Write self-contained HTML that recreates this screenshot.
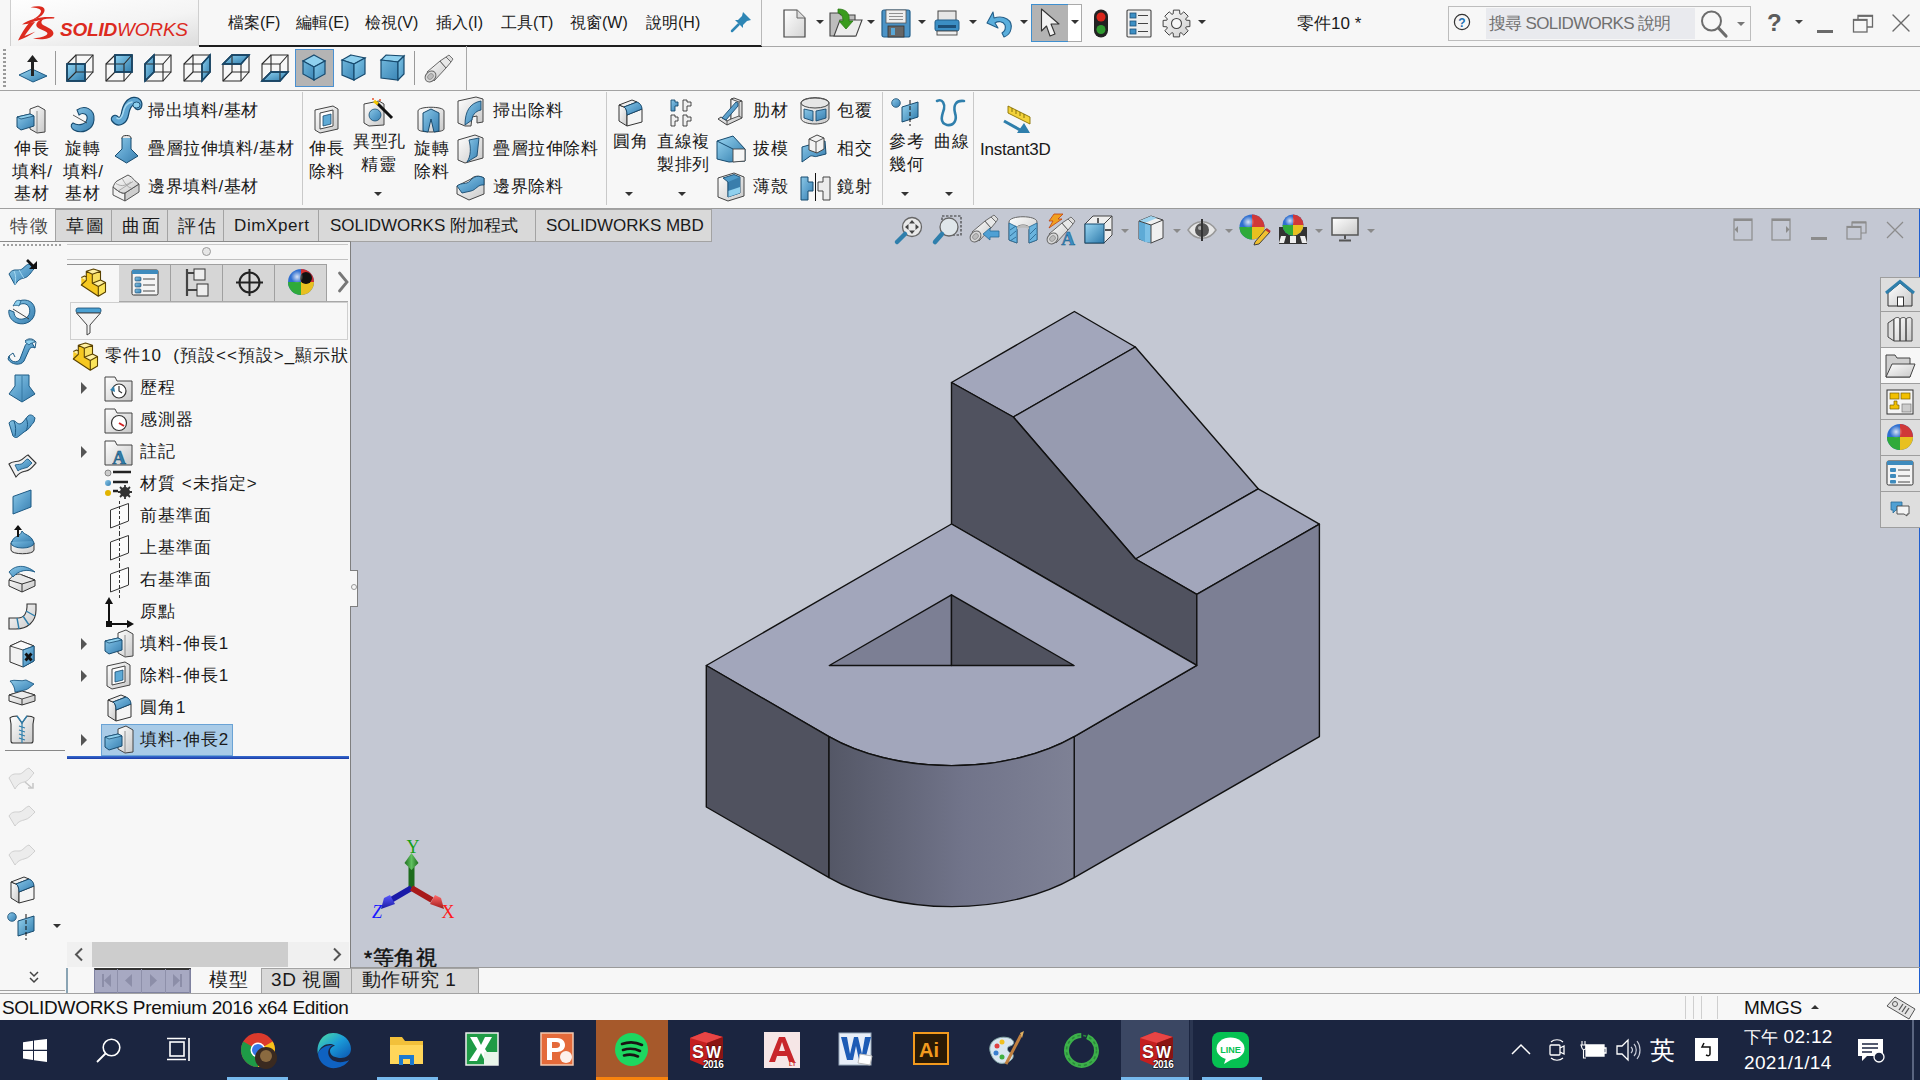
<!DOCTYPE html>
<html><head><meta charset="utf-8">
<style>
*{margin:0;padding:0;box-sizing:border-box}
html,body{width:1920px;height:1080px;overflow:hidden;background:#f7f7f7;font-family:"Liberation Sans",sans-serif;color:#111;position:relative}
.a{position:absolute}
.t{position:absolute;white-space:nowrap;line-height:1}
svg{position:absolute;overflow:visible}
.menu{font-size:16px;color:#1a1a1a}
.rb{font-size:17px;letter-spacing:0.6px;color:#1a1a1a}
.tb{font-size:17px;color:#1a1a1a}
.tr{font-size:17px;letter-spacing:1px;color:#1a1a1a}
.bt{font-size:19px;letter-spacing:0.6px;color:#1a1a1a}
.st{font-size:19px;letter-spacing:-0.3px;color:#111}
.tw{font-size:17px;color:#fff}
.vl{font-size:21px;font-weight:400;-webkit-text-stroke:0.5px #111;color:#111}
.dd{position:absolute;width:0;height:0;border-left:4px solid transparent;border-right:4px solid transparent;border-top:4px solid #333}
</style></head><body>
<div class="a" style="left:351px;top:209px;width:1569px;height:759px;background:#c4c8d3"></div>
<svg style="left:0;top:0" width="1920" height="1080" viewBox="0 0 1920 1080">
 <defs>
  <linearGradient id="cg" x1="829" x2="1074" y1="0" y2="0" gradientUnits="userSpaceOnUse">
   <stop offset="0" stop-color="#545766"/>
   <stop offset="0.55" stop-color="#71748a"/>
   <stop offset="1" stop-color="#7e8195"/>
  </linearGradient>
 </defs>
 <g stroke="#111" stroke-width="1.4" stroke-linejoin="round">
  <polygon points="951.5,382.5 1074.4,311.5 1135.3,347 1013.3,417" fill="#a2a6bb"/>
  <polygon points="1013.3,417 1135.3,347 1258.2,488.8 1135.6,559" fill="#979bb0"/>
  <polygon points="1135.6,559 1258.2,488.8 1319.4,524.2 1196.8,594.3" fill="#a2a6bb"/>
  <polygon points="951.5,382.5 1013.3,417 1135.6,559 1196.8,594.3 1196.8,665.3 951.5,524" fill="#50525f"/>
  <polygon points="1196.8,594.3 1319.4,524.2 1319.4,736.6 1074.2,877.6 1074.2,736.6 1196.8,665.3" fill="#7c7f94"/>
  <path d="M706.3,665.5 L951.5,524 L1196.8,665.3 L1074.2,736.6 A173.2 99 0 0 1 829,736.6 Z" fill="#a2a6bb"/>
  <polygon points="706.3,665.5 829,736.6 829,877.6 706.3,807" fill="#50525f"/>
  <path d="M829,736.6 A173.2 99 0 0 0 1074.2,736.6 L1074.2,877.6 A173.2 99 0 0 1 829,877.6 Z" fill="url(#cg)"/>
  <polygon points="829.3,665.5 951.5,594.8 951.5,665.5" fill="#7c7f94"/>
  <polygon points="951.5,594.8 1074.1,665.5 951.5,665.5" fill="#50525f"/>
 </g>
</svg>

<!-- ============ TITLE / MENU BAR ============ -->
<div class="a" style="left:0;top:0;width:1920px;height:46px;background:#f7f7f7"></div>
<div class="a" style="left:10px;top:0;width:189px;height:46px;background:linear-gradient(170deg,#fefefe 0%,#f4f4f4 55%,#dcdcdc 100%);border-left:1px solid #cfcfcf;border-right:1px solid #cfcfcf"></div>
<!-- logo -->
<svg style="left:18px;top:6px" width="37" height="35" viewBox="0 0 37 35">
 <g fill="#dc2a1e">
  <path d="M12.5,1.2 C 19,-0.5 27.5,-0.5 26.5,5 C 25.5,9.5 20,12.5 14,13.8 C 18.5,11.5 22.5,8.5 23,5.5 C 23.5,2.5 18,1.8 12.5,1.2 Z"/>
  <path d="M4,18.5 C 12,12.5 25,10 36.5,11.3 L36,12.6 C 27,12.5 18,14.5 10.5,17.8 Z"/>
  <path d="M11.5,16.5 L17,16 C 12.5,21.5 9,26.5 6.5,30 C 10.5,28.5 14,27 17.5,25.5 C 12,29.5 6,32.5 0,34.5 C 3,28 7,21.5 11.5,16.5 Z"/>
  <path d="M26.5,12.4 C 19,14 15.5,19.5 21,22.5 C 25,24.5 32,26 28.5,29 C 25,31.5 19,32 15,32.5 C 22,34 32,33.8 35,29 C 37.5,24.5 30,21.5 26,19.5 C 22.5,17.5 22.5,14.5 26.5,12.4 Z"/>
 </g>
</svg>
<div class="t" style="left:60px;top:20px;font-size:19px;font-style:italic;color:#dc2a1e;letter-spacing:-0.2px"><b style="font-weight:700">SOLID</b>WORKS</div>

<div class="a" style="left:199px;top:45px;width:563px;height:1.5px;background:#1e1e1e"></div>
<div class="a" style="left:761px;top:0;width:1px;height:46px;background:#b9b9b9"></div>
<div class="a" style="left:762px;top:46px;width:1158px;height:1px;background:#a8a8a8"></div>

<div class="t menu" style="left:228px;top:15px">檔案(F)</div>
<div class="t menu" style="left:296px;top:15px">編輯(E)</div>
<div class="t menu" style="left:365px;top:15px">檢視(V)</div>
<div class="t menu" style="left:436px;top:15px">插入(I)</div>
<div class="t menu" style="left:501px;top:15px">工具(T)</div>
<div class="t menu" style="left:570px;top:15px">視窗(W)</div>
<div class="t menu" style="left:646px;top:15px">說明(H)</div>
<!-- pin -->
<svg style="left:730px;top:11px" width="22" height="22" viewBox="0 0 22 22">
 <path d="M13,1 L21,9 L17,10 L13,14 L13,17 L5,9 L8,9 L12,5 Z" fill="#2e86b5"/>
 <path d="M8.5,13.5 L2,20" stroke="#2e86b5" stroke-width="2.5" stroke-linecap="round"/>
</svg>

<!-- standard toolbar -->
<svg style="left:783px;top:9px" width="24" height="29" viewBox="0 0 24 29">
 <defs><linearGradient id="pg" x1="0" y1="0" x2="1" y2="1"><stop offset="0" stop-color="#fff"/><stop offset="1" stop-color="#d4d4d4"/></linearGradient></defs>
 <path d="M1,1 L14,1 L22,9 L22,28 L1,28 Z" fill="url(#pg)" stroke="#444" stroke-width="1.2"/>
 <path d="M14,1 L14,9 L22,9" fill="#ddd" stroke="#666" stroke-width="1"/>
</svg>
<div class="dd" style="left:816px;top:20px"></div>
<svg style="left:829px;top:8px" width="34" height="30" viewBox="0 0 34 30">
 <path d="M1,5 L10,5 L12,7 L26,7 L26,28 L1,28 Z" fill="#bdbdbd" stroke="#444" stroke-width="1.1"/>
 <path d="M5,28 L11,12 L33,12 L27,28 Z" fill="#ececec" stroke="#444" stroke-width="1.1"/>
 <path d="M9,1 C 18,1 21,6 20,13 L24,13 L17,21 L10,13 L14,13 C 14,8 12,5 9,5 Z" fill="#3a9b1e" stroke="#2b7a14" stroke-width="0.8"/>
</svg>
<div class="dd" style="left:867px;top:20px"></div>
<svg style="left:881px;top:9px" width="30" height="29" viewBox="0 0 30 29">
 <rect x="1" y="1" width="28" height="27" rx="2" fill="#4b93c6" stroke="#235f8a" stroke-width="1.2"/>
 <rect x="5" y="1" width="20" height="13" fill="#eee" stroke="#555" stroke-width="0.8"/>
 <path d="M8,4.5 H22 M8,7.5 H22 M8,10.5 H22" stroke="#777" stroke-width="0.8"/>
 <rect x="7" y="17" width="16" height="11" fill="#666" stroke="#333" stroke-width="0.8"/>
 <rect x="10" y="19" width="4" height="7" fill="#5aa7d6"/>
</svg>
<div class="dd" style="left:918px;top:20px"></div>
<svg style="left:934px;top:10px" width="28" height="26" viewBox="0 0 28 26">
 <rect x="4" y="1" width="18" height="10" fill="#e6e6e6" stroke="#444" stroke-width="1"/>
 <rect x="1" y="10" width="24" height="11" rx="2" fill="#3b8ec4" stroke="#235f8a" stroke-width="1"/>
 <rect x="4" y="15" width="18" height="3" fill="#1d4f77"/>
 <rect x="3" y="21" width="20" height="4" fill="#eee" stroke="#444" stroke-width="0.9"/>
</svg>
<div class="dd" style="left:969px;top:20px"></div>
<svg style="left:984px;top:10px" width="30" height="28" viewBox="0 0 30 28">
 <path d="M3,13 L9,2 L10,8 C 20,5 29,10 27,19 C 26,24 23,26 20,27 L18,23 C 21,21 22,18 21,15 C 19,11 14,11 11,13 L14,18 Z" fill="#5aaedc" stroke="#235f8a" stroke-width="1.1" stroke-linejoin="round"/>
</svg>
<div class="dd" style="left:1020px;top:20px"></div>
<div class="a" style="left:1031px;top:4px;width:38px;height:38px;background:#b3b3b3;border:1px solid #3f8fcf"></div>
<div class="a" style="left:1068px;top:4px;width:14px;height:38px;background:#fff;border:1px solid #aaa;border-left:none"></div>
<svg style="left:1040px;top:8px" width="22" height="30" viewBox="0 0 22 30">
 <path d="M1.5,1 L19,16 L11,16 L15,26 L10,28 L6.5,18 L1.5,23 Z" fill="#f2f2f2" stroke="#333" stroke-width="1.1" stroke-linejoin="round"/>
</svg>
<div class="dd" style="left:1071px;top:20px"></div>
<svg style="left:1093px;top:9px" width="16" height="29" viewBox="0 0 16 29">
 <rect x="1" y="0.5" width="14" height="28" rx="7" fill="#222"/>
 <circle cx="8" cy="8" r="4.5" fill="#d9261b"/><circle cx="8" cy="20.5" r="4.5" fill="#2f9a2f"/>
</svg>
<svg style="left:1126px;top:9px" width="26" height="29" viewBox="0 0 26 29">
 <rect x="1" y="1" width="24" height="27" rx="1" fill="#f0f0f0" stroke="#444" stroke-width="1.1"/>
 <rect x="4" y="4" width="6" height="5" fill="#3d8fc4" stroke="#1d4f77" stroke-width="0.8"/>
 <rect x="4" y="12" width="6" height="5" fill="#3d8fc4" stroke="#1d4f77" stroke-width="0.8"/>
 <rect x="4" y="20" width="6" height="5" fill="#3d8fc4" stroke="#1d4f77" stroke-width="0.8"/>
 <path d="M12,6.5 H22 M12,14.5 H22 M12,22.5 H22" stroke="#444" stroke-width="1"/>
</svg>
<svg style="left:1162px;top:9px" width="29" height="29" viewBox="0 0 29 29"><defs><linearGradient id="gg" x1="0" y1="0" x2="1" y2="1"><stop offset="0" stop-color="#fafafa"/><stop offset="1" stop-color="#cfcfcf"/></linearGradient></defs><path d="M24.2,11.2 L27.9,11.4 L27.9,17.6 L24.2,17.8 L23.6,19.0 L26.2,21.8 L21.8,26.2 L19.0,23.6 L17.8,24.2 L17.6,27.9 L11.4,27.9 L11.2,24.2 L10.0,23.6 L7.2,26.2 L2.8,21.8 L5.4,19.0 L4.8,17.8 L1.1,17.6 L1.1,11.4 L4.8,11.2 L5.4,10.0 L2.8,7.2 L7.2,2.8 L10.0,5.4 L11.2,4.8 L11.4,1.1 L17.6,1.1 L17.8,4.8 L19.0,5.4 L21.8,2.8 L26.2,7.2 L23.6,10.0 Z" fill="url(#gg)" stroke="#444" stroke-width="1" stroke-linejoin="round"/><circle cx="14.5" cy="14.5" r="5" fill="#f7f7f7" stroke="#444" stroke-width="1.1"/></svg>
<div class="dd" style="left:1198px;top:20px"></div>

<div class="t" style="left:1297px;top:15px;font-size:17px;color:#1a1a1a">零件10 *</div>

<!-- search -->
<div class="a" style="left:1448px;top:6px;width:303px;height:35px;background:#f7f7f7;border:1px solid #bdbdbd"></div>
<div class="a" style="left:1486px;top:8px;width:209px;height:31px;background:#e9eaee"></div>
<svg style="left:1453px;top:13px" width="18" height="18" viewBox="0 0 18 18">
 <circle cx="9" cy="9" r="7.6" fill="#f7f7f7" stroke="#333" stroke-width="1.2"/>
 <text x="9" y="13.5" font-size="12" font-weight="bold" text-anchor="middle" fill="#1e6fb0" font-family="Liberation Sans">?</text>
</svg>
<div class="t" style="left:1489px;top:15px;font-size:17px;letter-spacing:-0.7px;color:#707070">搜尋 SOLIDWORKS 說明</div>
<svg style="left:1700px;top:10px" width="30" height="28" viewBox="0 0 30 28">
 <circle cx="11.5" cy="11" r="9.5" fill="none" stroke="#6c6c6c" stroke-width="2"/>
 <path d="M18.5,18 L26,26" stroke="#6c6c6c" stroke-width="3.2" stroke-linecap="round"/>
</svg>
<div class="dd" style="left:1737px;top:22px;border-top-color:#777"></div>
<div class="t" style="left:1767px;top:11px;font-size:24px;font-weight:bold;color:#5c5c5c">?</div>
<div class="dd" style="left:1795px;top:20px;border-top-color:#444"></div>
<div class="a" style="left:1817px;top:30px;width:16px;height:3px;background:#6a6a6a"></div>
<svg style="left:1852px;top:14px" width="22" height="20" viewBox="0 0 22 20">
 <path d="M6,5 V1.5 H20.5 V13 H15" fill="none" stroke="#6a6a6a" stroke-width="1.3"/><path d="M6,2 H20.5" stroke="#6a6a6a" stroke-width="1.8"/>
 <rect x="1.5" y="5.5" width="13.5" height="12.5" fill="none" stroke="#6a6a6a" stroke-width="1.3"/><path d="M1.5,6 H15" stroke="#6a6a6a" stroke-width="1.8"/>
</svg>
<svg style="left:1892px;top:14px" width="18" height="18" viewBox="0 0 18 18">
 <path d="M1,1 L17,17 M17,1 L1,17" stroke="#6a6a6a" stroke-width="1.4" stroke-linecap="round"/>
</svg>

<!-- ============ VIEW TOOLBAR ============ -->
<svg style="left:0;top:0" width="0" height="0"><defs><linearGradient id="bg1" x1="0" y1="0" x2="1" y2="1"><stop offset="0" stop-color="#8fd3f2"/><stop offset="1" stop-color="#2f7bab"/></linearGradient><linearGradient id="bg2" x1="0" y1="0" x2="1" y2="1"><stop offset="0" stop-color="#6fb6db"/><stop offset="1" stop-color="#3b86b6"/></linearGradient><linearGradient id="bg3" x1="0" y1="0" x2="1" y2="1"><stop offset="0" stop-color="#80c8ea"/><stop offset="1" stop-color="#4a93c0"/></linearGradient><linearGradient id="bl" x1="0" y1="0" x2="1" y2="1"><stop offset="0" stop-color="#9ad6f2"/><stop offset="1" stop-color="#2c79aa"/></linearGradient><linearGradient id="bls" x1="0" y1="0" x2="1" y2="1"><stop offset="0" stop-color="#8dc8e6"/><stop offset="0.55" stop-color="#5a9fcb"/><stop offset="1" stop-color="#3a7eac"/></linearGradient><linearGradient id="gr" x1="0" y1="0" x2="1" y2="1"><stop offset="0" stop-color="#ffffff"/><stop offset="1" stop-color="#c8c8c8"/></linearGradient></defs></svg>
<div class="a" style="left:3px;top:49px;width:3px;height:39px;background:repeating-linear-gradient(#9a9a9a 0 2px,transparent 2px 4px)"></div>
<svg style="left:18px;top:54px" width="30" height="30" viewBox="0 0 30 30"><polygon points="1,21 14,15 29,22 15,28" fill="url(#bl)" stroke="#1d5a84" stroke-width="1"/><path d="M14.5,22 V6" stroke="#222" stroke-width="3"/><polygon points="9,8 14.5,1 20,8" fill="#222"/></svg>
<div class="a" style="left:55px;top:51px;width:1px;height:34px;background:#999"></div>
<svg style="left:66px;top:54px" width="28" height="28" viewBox="0 0 28 28"><polygon points="1,10 19,10 19,27 1,27" fill="url(#bg1)" stroke="#174a6e" stroke-width="1.3"/><g fill="none" stroke="#2a2a2a" stroke-width="1.1"><polygon points="1,10 19,10 19,27 1,27"/><polygon points="10,1 27,1 27,18 10,18"/><path d="M1,10 L10,1 M19,10 L27,1 M19,27 L27,18 M1,27 L10,18"/></g><polygon points="1,10 19,10 19,27 1,27" fill="none" stroke="#174a6e" stroke-width="1.4"/></svg>
<svg style="left:105px;top:54px" width="28" height="28" viewBox="0 0 28 28"><polygon points="10,1 27,1 27,18 10,18" fill="url(#bg1)" stroke="#174a6e" stroke-width="1.3"/><g fill="none" stroke="#2a2a2a" stroke-width="1.1"><polygon points="1,10 19,10 19,27 1,27"/><polygon points="10,1 27,1 27,18 10,18"/><path d="M1,10 L10,1 M19,10 L27,1 M19,27 L27,18 M1,27 L10,18"/></g><polygon points="10,1 27,1 27,18 10,18" fill="none" stroke="#174a6e" stroke-width="1.4"/></svg>
<svg style="left:144px;top:54px" width="28" height="28" viewBox="0 0 28 28"><polygon points="1,10 10,1 10,18 1,27" fill="url(#bg1)" stroke="#174a6e" stroke-width="1.3"/><g fill="none" stroke="#2a2a2a" stroke-width="1.1"><polygon points="1,10 19,10 19,27 1,27"/><polygon points="10,1 27,1 27,18 10,18"/><path d="M1,10 L10,1 M19,10 L27,1 M19,27 L27,18 M1,27 L10,18"/></g><polygon points="1,10 10,1 10,18 1,27" fill="none" stroke="#174a6e" stroke-width="1.4"/></svg>
<svg style="left:183px;top:54px" width="28" height="28" viewBox="0 0 28 28"><polygon points="19,10 27,1 27,18 19,27" fill="url(#bg1)" stroke="#174a6e" stroke-width="1.3"/><g fill="none" stroke="#2a2a2a" stroke-width="1.1"><polygon points="1,10 19,10 19,27 1,27"/><polygon points="10,1 27,1 27,18 10,18"/><path d="M1,10 L10,1 M19,10 L27,1 M19,27 L27,18 M1,27 L10,18"/></g><polygon points="19,10 27,1 27,18 19,27" fill="none" stroke="#174a6e" stroke-width="1.4"/></svg>
<svg style="left:222px;top:54px" width="28" height="28" viewBox="0 0 28 28"><polygon points="1,10 10,1 27,1 19,10" fill="url(#bg1)" stroke="#174a6e" stroke-width="1.3"/><g fill="none" stroke="#2a2a2a" stroke-width="1.1"><polygon points="1,10 19,10 19,27 1,27"/><polygon points="10,1 27,1 27,18 10,18"/><path d="M1,10 L10,1 M19,10 L27,1 M19,27 L27,18 M1,27 L10,18"/></g><polygon points="1,10 10,1 27,1 19,10" fill="none" stroke="#174a6e" stroke-width="1.4"/></svg>
<svg style="left:261px;top:54px" width="28" height="28" viewBox="0 0 28 28"><polygon points="1,27 10,18 27,18 19,27" fill="url(#bg1)" stroke="#174a6e" stroke-width="1.3"/><g fill="none" stroke="#2a2a2a" stroke-width="1.1"><polygon points="1,10 19,10 19,27 1,27"/><polygon points="10,1 27,1 27,18 10,18"/><path d="M1,10 L10,1 M19,10 L27,1 M19,27 L27,18 M1,27 L10,18"/></g><polygon points="1,27 10,18 27,18 19,27" fill="none" stroke="#174a6e" stroke-width="1.4"/></svg>
<div class="a" style="left:295px;top:49px;width:39px;height:38px;background:#b4b4b4;border:1px solid #4a90d0"></div>
<svg style="left:302px;top:54px" width="24" height="27" viewBox="0 0 24 27"><polygon points="12,1 23,7 12,13 1,7" fill="#8fd0ee" stroke="#174a6e" stroke-width="1.2"/><polygon points="1,7 12,13 12,26 1,20" fill="url(#bg2)" stroke="#174a6e" stroke-width="1.2"/><polygon points="12,13 23,7 23,20 12,26" fill="url(#bg3)" stroke="#174a6e" stroke-width="1.2"/></svg>
<svg style="left:341px;top:54px" width="24" height="27" viewBox="0 0 24 27"><polygon points="10,1 24,4 13,10 1,6" fill="#8fd0ee" stroke="#174a6e" stroke-width="1.2"/><polygon points="1,6 13,10 13,26 1,21" fill="url(#bg2)" stroke="#174a6e" stroke-width="1.2"/><polygon points="13,10 24,4 24,20 13,26" fill="url(#bg3)" stroke="#174a6e" stroke-width="1.2"/></svg>
<svg style="left:380px;top:54px" width="24" height="27" viewBox="0 0 24 27"><polygon points="6,1 24,2 18,8 1,6" fill="#8fd0ee" stroke="#174a6e" stroke-width="1.2"/><polygon points="1,6 18,8 18,26 1,24" fill="url(#bg2)" stroke="#174a6e" stroke-width="1.2"/><polygon points="18,8 24,2 24,20 18,26" fill="url(#bg3)" stroke="#174a6e" stroke-width="1.2"/></svg>
<div class="a" style="left:414px;top:51px;width:1px;height:34px;background:#999"></div>
<svg style="left:425px;top:55px" width="30" height="30" viewBox="0 0 30 30"><path d="M2,17 L15,6 L21,13 L9,26 Z" fill="url(#gr)" stroke="#666" stroke-width="1"/><path d="M15,6 L21,2 L26,7 L21,13 Z" fill="#e8e8e8" stroke="#666" stroke-width="1"/><path d="M21,2 L24,0 L28,4 L26,7 Z" fill="#ddd" stroke="#666" stroke-width="0.9"/><ellipse cx="5.5" cy="21.5" rx="6" ry="4.8" transform="rotate(-45 5.5 21.5)" fill="#d8d8d8" stroke="#666" stroke-width="1"/><ellipse cx="5.5" cy="21.5" rx="3.3" ry="2.5" transform="rotate(-45 5.5 21.5)" fill="#bbb" stroke="#888" stroke-width="0.7"/></svg>
<div class="a" style="left:466px;top:46px;width:1px;height:44px;background:#a8a8a8"></div>
<div class="a" style="left:0;top:90px;width:1920px;height:1px;background:#a3a3a3"></div>
<!-- ============ RIBBON ============ -->
<div class="a" style="left:302px;top:92px;width:1px;height:113px;background:#c9c9c9"></div>
<div class="a" style="left:606px;top:92px;width:1px;height:113px;background:#c9c9c9"></div>
<div class="a" style="left:882px;top:92px;width:1px;height:113px;background:#c9c9c9"></div>
<div class="a" style="left:973px;top:92px;width:1px;height:113px;background:#c9c9c9"></div>
<div class="a" style="left:0px;top:208px;width:712px;height:1px;background:#a0a0a0"></div>
<svg style="left:16px;top:105px" width="30" height="29" viewBox="0 0 30 29"><polygon points="14,4 22,1 29,5 29,27 21,28 14,24" fill="url(#gr)" stroke="#444" stroke-width="1"/><path d="M21,6 V28" stroke="#777" stroke-width="0.8"/><polygon points="1,12 14,9 18,11 18,21 5,25 1,22" fill="url(#bls)" stroke="#174a6e" stroke-width="1"/><polygon points="1,12 14,9 18,11 5,14" fill="#8fd0ee" stroke="#174a6e" stroke-width="0.8"/></svg>
<div class="t rb" style="left:14px;top:140px;">伸長</div>
<div class="t rb" style="left:12px;top:163px;">填料/</div>
<div class="t rb" style="left:14px;top:185px;">基材</div>
<svg style="left:68px;top:105px" width="28" height="29" viewBox="0 0 28 29"><path d="M9,5 C 16,0 27,3 26,15 C 25,26 13,29 6,25 C 3,23 2,20 5,18 C 10,21 18,20 19,14 C 20,9 15,7 11,10 Z" fill="url(#bls)" stroke="#174a6e" stroke-width="1.1"/><path d="M5,10 L19,18" stroke="#333" stroke-width="0.8"/></svg>
<div class="t rb" style="left:65px;top:140px;">旋轉</div>
<div class="t rb" style="left:63px;top:163px;">填料/</div>
<div class="t rb" style="left:65px;top:185px;">基材</div>
<svg style="left:111px;top:96px" width="31" height="30" viewBox="0 0 31 30"><path d="M4,23 C 8,28 13,24 14,18 C 15,12 17,6 23,5 C 26,4.5 28,7 27,10" fill="none" stroke="#174a6e" stroke-width="8.5" stroke-linecap="round"/><path d="M4,23 C 8,28 13,24 14,18 C 15,12 17,6 23,5 C 26,4.5 28,7 27,10" fill="none" stroke="#5fa6d2" stroke-width="6" stroke-linecap="round"/><path d="M6,22 C 9,24 11,21 12,17 C 13,11 16,7 21,6" fill="none" stroke="#a5d8f0" stroke-width="1.6" stroke-linecap="round"/><ellipse cx="25.5" cy="9" rx="3.6" ry="3" fill="#8fd0ee" stroke="#174a6e" stroke-width="0.9"/></svg>
<div class="t rb" style="left:148px;top:102px;">掃出填料/基材</div>
<svg style="left:114px;top:134px" width="25" height="30" viewBox="0 0 25 30"><ellipse cx="12.5" cy="4" rx="4.5" ry="2.5" fill="#e8e8e8" stroke="#333" stroke-width="1"/><path d="M8,4 L8,15 L1,22 L12.5,29 L24,22 L17,15 L17,4" fill="url(#bls)" stroke="#174a6e" stroke-width="1"/></svg>
<div class="t rb" style="left:148px;top:140px;">疊層拉伸填料/基材</div>
<svg style="left:111px;top:173px" width="30" height="29" viewBox="0 0 30 29"><path d="M2,14 L2,22 L14,28 L14,20 C 10,21 6,17 2,14 Z" fill="#f2f2f2" stroke="#555" stroke-width="1"/><path d="M14,20 L14,28 L28,19 L28,11 Z" fill="#cfcfcf" stroke="#555" stroke-width="1"/><path d="M2,14 C 6,17 10,21 14,20 L28,11 C 24,9 22,4 17,2 L6,8 C 4,9 3,12 2,14 Z" fill="url(#gr)" stroke="#555" stroke-width="1"/><path d="M8,17.5 L22,8.5 M5,10.5 C 9,13 13,14 20,9 M11,5 C 13,9 16,14 20,15" fill="none" stroke="#999" stroke-width="0.8"/></svg>
<div class="t rb" style="left:148px;top:178px;">邊界填料/基材</div>
<svg style="left:314px;top:105px" width="25" height="29" viewBox="0 0 25 29"><polygon points="1,5 19,1 24,4 24,24 6,28 1,25" fill="url(#gr)" stroke="#444" stroke-width="1"/><polygon points="6,8 19,5 19,21 6,24" fill="#fff" stroke="#444" stroke-width="1"/><polygon points="9,11 17,9 17,19 9,21" fill="#5eaad6" stroke="#174a6e" stroke-width="0.8"/></svg>
<div class="t rb" style="left:309px;top:140px;">伸長</div>
<div class="t rb" style="left:309px;top:163px;">除料</div>
<svg style="left:363px;top:97px" width="32" height="30" viewBox="0 0 32 30"><polygon points="1,7 16,4 21,7 21,28 6,29 1,26" fill="url(#gr)" stroke="#444" stroke-width="1"/><circle cx="12" cy="18" r="6" fill="url(#bls)" stroke="#174a6e" stroke-width="0.8"/><path d="M14,6 L29,21" stroke="#111" stroke-width="3"/><path d="M11,4 L15,7" stroke="#f2c500" stroke-width="3"/><circle cx="10" cy="2" r="1" fill="#e8502a"/><circle cx="17" cy="3" r="1" fill="#e8502a"/></svg>
<div class="t rb" style="left:353px;top:133px;">異型孔</div>
<div class="t rb" style="left:361px;top:156px;">精靈</div>
<div class="dd" style="left:374px;top:192px"></div>
<svg style="left:417px;top:105px" width="28" height="29" viewBox="0 0 28 29"><path d="M1,6 C 1,1 27,1 27,6 L27,24 C 27,28 1,28 1,24 Z" fill="url(#gr)" stroke="#444" stroke-width="1"/><polygon points="6,8 14,4 22,8 22,26 17,27 14,14 11,27 6,26" fill="url(#bls)" stroke="#174a6e" stroke-width="1"/></svg>
<div class="t rb" style="left:414px;top:140px;">旋轉</div>
<div class="t rb" style="left:414px;top:163px;">除料</div>
<svg style="left:457px;top:96px" width="27" height="31" viewBox="0 0 27 31"><polygon points="1,5 19,1 26,3 26,26 20,27 20,20 15,21 14,30 8,30 1,27" fill="url(#gr)" stroke="#444" stroke-width="1"/><path d="M8,29 C 8,15 13,7 24,5 L24,14 C 18,15 15,20 15,24 Z" fill="url(#bls)" stroke="#174a6e" stroke-width="0.9"/></svg>
<div class="t rb" style="left:493px;top:102px;">掃出除料</div>
<svg style="left:457px;top:134px" width="27" height="30" viewBox="0 0 27 30"><polygon points="1,6 18,1 26,4 26,24 8,29 1,26" fill="url(#gr)" stroke="#444" stroke-width="1"/><path d="M12,6 L22,4 L20,22 L10,28 C 14,22 14,14 12,6 Z" fill="url(#bls)" stroke="#174a6e" stroke-width="0.9"/></svg>
<div class="t rb" style="left:493px;top:140px;">疊層拉伸除料</div>
<svg style="left:456px;top:172px" width="29" height="29" viewBox="0 0 29 29"><path d="M1,14 L15,7 C 18,4 22,3 28,6 L28,22 L13,28 L1,22 Z" fill="url(#gr)" stroke="#444" stroke-width="1"/><path d="M1,14 C 6,10 10,13 14,9 C 18,4 23,3 28,6 L28,13 C 22,12 20,18 15,19 L6,21 Z" fill="url(#bls)" stroke="#174a6e" stroke-width="0.9"/></svg>
<div class="t rb" style="left:493px;top:178px;">邊界除料</div>
<svg style="left:618px;top:99px" width="26" height="29" viewBox="0 0 26 29"><path d="M1,6 L6,8 C 8,9 9,12 9,16 L9,27 L1,22 Z" fill="url(#gr)" stroke="#333" stroke-width="1" stroke-linejoin="round"/><path d="M9,16 L24,10 L24,23 L9,27 Z" fill="#f4f4f4" stroke="#333" stroke-width="1" stroke-linejoin="round"/><path d="M1,6 L14,1 L19,3 L6,8 Z" fill="#f0f0f0" stroke="#333" stroke-width="1" stroke-linejoin="round"/><path d="M6,8 L19,3 C 22,4 24,7 24,10 L9,16 C 9,12 8,9 6,8 Z" fill="url(#bls)" stroke="#174a6e" stroke-width="1" stroke-linejoin="round"/></svg>
<div class="t rb" style="left:613px;top:133px;">圓角</div>
<div class="dd" style="left:625px;top:192px"></div>
<svg style="left:670px;top:99px" width="24" height="29" viewBox="0 0 24 29"><g fill="#f0f0f0" stroke="#333" stroke-width="0.9"><path d="M1,16 H5 V18 H8 V22 H5 V27 H1 Z"/><path d="M13,16 H17 V18 H21 V22 H17 V27 H13 Z"/><path d="M13,1 H17 V3 H21 V7 H17 V12 H13 Z"/></g><path d="M1,1 H5 V3 H8 V7 H5 V12 H1 Z" fill="url(#bls)" stroke="#174a6e" stroke-width="0.9"/></svg>
<div class="t rb" style="left:657px;top:133px;">直線複</div>
<div class="t rb" style="left:657px;top:156px;">製排列</div>
<div class="dd" style="left:678px;top:192px"></div>
<svg style="left:717px;top:97px" width="27" height="30" viewBox="0 0 27 30"><path d="M14,2 L17,1 L25,4 L25,21 L10,28 L1,22 L4,20 L10,24 L14,22 Z" fill="url(#gr)" stroke="#444" stroke-width="1" stroke-linejoin="round"/><path d="M14,2 L22,5 L22,19 L14,22 Z" fill="#f4f4f4" stroke="#444" stroke-width="0.9"/><path d="M22,5 L25,4 M22,19 L25,21 M10,24 L10,28" stroke="#444" stroke-width="0.9"/><path d="M5,21 L19,5 L21,6 L21,9 L9,23 Z" fill="url(#bls)" stroke="#174a6e" stroke-width="0.9"/></svg>
<div class="t rb" style="left:753px;top:102px;">肋材</div>
<svg style="left:716px;top:135px" width="30" height="28" viewBox="0 0 30 28"><polygon points="1,6 17,1 29,14 29,26 13,27 1,24" fill="url(#bl)" stroke="#174a6e" stroke-width="1"/><polygon points="17,14 29,14 29,26 17,27" fill="#f6f6f6" stroke="#444" stroke-width="0.9"/><path d="M1,6 L17,14" stroke="#174a6e" stroke-width="1"/></svg>
<div class="t rb" style="left:753px;top:140px;">拔模</div>
<svg style="left:717px;top:172px" width="28" height="30" viewBox="0 0 28 30"><polygon points="1,6 17,1 27,5 27,24 11,29 1,25" fill="url(#gr)" stroke="#444" stroke-width="1"/><polygon points="6,6 17,2.5 23,5 23,21 11,25 11,10" fill="#4f9bc9" stroke="#174a6e" stroke-width="0.9"/><polygon points="11,10 23,5 23,21 11,25" fill="#3a7eac"/><polygon points="11,19 23,15 23,21 11,25" fill="#8fd0ee"/><path d="M11,10 V25" stroke="#174a6e" stroke-width="0.8"/></svg>
<div class="t rb" style="left:753px;top:178px;">薄殼</div>
<svg style="left:800px;top:96px" width="30" height="30" viewBox="0 0 30 30"><path d="M1,7 C 1,0 29,0 29,7 L29,22 C 29,30 1,30 1,22 Z" fill="url(#gr)" stroke="#444" stroke-width="1"/><ellipse cx="15" cy="7" rx="14" ry="5" fill="#e6e6e6" stroke="#444" stroke-width="1"/><path d="M4,13 L13,15 L13,25 L4,22 Z M16,15 L26,13 L26,22 L16,25 Z" fill="url(#bls)" stroke="#174a6e" stroke-width="0.9"/></svg>
<div class="t rb" style="left:837px;top:102px;">包覆</div>
<svg style="left:800px;top:134px" width="28" height="29" viewBox="0 0 28 29"><path d="M2,13 L9,11 L25,7 L26,20 L18,22 C 14,24 12,20 9,23 L2,28 Z" fill="url(#bls)" stroke="#174a6e" stroke-width="1"/><polygon points="9,5 17,1 24,4 24,15 17,19 9,16" fill="#f2f2f2" stroke="#444" stroke-width="1"/><path d="M9,5 L16,8 L24,4 M16,8 V19" fill="none" stroke="#444" stroke-width="0.9"/></svg>
<div class="t rb" style="left:837px;top:140px;">相交</div>
<svg style="left:800px;top:173px" width="31" height="28" viewBox="0 0 31 28"><path d="M1,4 H8 V9 H13 V18 H8 V27 H1 Z" fill="url(#bls)" stroke="#174a6e" stroke-width="1"/><path d="M30,4 H23 V9 H18 V18 H23 V27 H30 Z" fill="#ececec" stroke="#444" stroke-width="1"/><path d="M15.5,0 V28" stroke="#111" stroke-width="1"/></svg>
<div class="t rb" style="left:837px;top:178px;">鏡射</div>
<svg style="left:891px;top:98px" width="29" height="29" viewBox="0 0 29 29"><circle cx="5" cy="5" r="4.3" fill="url(#bls)" stroke="#174a6e" stroke-width="0.8"/><polygon points="11,9 27,4 27,19 11,24" fill="url(#bl)" stroke="#174a6e" stroke-width="1"/><path d="M19,2 V28" stroke="#111" stroke-width="1" stroke-dasharray="4 2"/></svg>
<div class="t rb" style="left:889px;top:133px;">參考</div>
<div class="t rb" style="left:889px;top:156px;">幾何</div>
<div class="dd" style="left:901px;top:192px"></div>
<svg style="left:935px;top:99px" width="30" height="28" viewBox="0 0 30 28"><path d="M2,2 C 8,-1 10,6 9,10 C 7,16 4,24 12,26 C 20,27 22,20 20,14 C 18,6 21,1 29,2" fill="none" stroke="#2f7fac" stroke-width="2.6" stroke-linecap="round"/></svg>
<div class="t rb" style="left:934px;top:133px;">曲線</div>
<div class="dd" style="left:945px;top:192px"></div>
<svg style="left:1002px;top:105px" width="30" height="30" viewBox="0 0 30 30"><polygon points="6,1 28,12 28,19 6,8" fill="#f3d23a" stroke="#8a7200" stroke-width="0.9"/><path d="M10,3 V7 M14,5 V9 M18,7 V11 M22,9 V13" stroke="#6a5a00" stroke-width="0.8"/><path d="M2,16 L20,26" stroke="#2f7fac" stroke-width="3"/><polygon points="15,28 28,28 22,18" fill="#2f7fac"/></svg>
<div class="t rb" style="left:980px;top:141px;font-size:17px;letter-spacing:-0.25px">Instant3D</div>
<!-- ============ TABS ============ -->
<div class="a" style="left:0px;top:209px;width:55px;height:32px;background:#f7f7f7"></div>
<div class="t tb" style="left:10px;top:217px;color:#4a4a4a;font-size:18px;letter-spacing:2px">特徵</div>
<div class="a" style="left:55px;top:209px;width:57px;height:33px;background:#d9d9d9;border:1px solid #a3a3a3"></div>
<div class="t tb" style="left:66px;top:217px;font-size:18px;letter-spacing:2px">草圖</div>
<div class="a" style="left:111px;top:209px;width:57px;height:33px;background:#d9d9d9;border:1px solid #a3a3a3"></div>
<div class="t tb" style="left:122px;top:217px;font-size:18px;letter-spacing:2px">曲面</div>
<div class="a" style="left:167px;top:209px;width:57px;height:33px;background:#d9d9d9;border:1px solid #a3a3a3"></div>
<div class="t tb" style="left:178px;top:217px;font-size:18px;letter-spacing:2px">評估</div>
<div class="a" style="left:223px;top:209px;width:96px;height:33px;background:#d9d9d9;border:1px solid #a3a3a3"></div>
<div class="t tb" style="left:234px;top:217px;letter-spacing:0.6px">DimXpert</div>
<div class="a" style="left:318px;top:209px;width:218px;height:33px;background:#d9d9d9;border:1px solid #a3a3a3"></div>
<div class="t tb" style="left:330px;top:217px;">SOLIDWORKS 附加程式</div>
<div class="a" style="left:535px;top:209px;width:177px;height:33px;background:#d9d9d9;border:1px solid #a3a3a3"></div>
<div class="t tb" style="left:546px;top:217px;">SOLIDWORKS MBD</div>
<div class="a" style="left:0px;top:241px;width:351px;height:1px;background:#8a8a8a"></div>
<!-- ============ LEFT PANEL ============ -->
<div class="a" style="left:0px;top:242px;width:350px;height:726px;background:#f7f7f7"></div>
<div class="a" style="left:3px;top:244px;width:60px;height:2px;background:repeating-linear-gradient(90deg,#a0a0a0 0 2px,transparent 2px 4px)"></div>
<div class="a" style="left:67px;top:244px;width:281px;height:1px;background:#c8c8c8"></div>
<div class="a" style="left:202px;top:247px;width:9px;height:9px;border-radius:50%;border:1px solid #999;background:#e6e6e6"></div>
<div class="a" style="left:67px;top:259px;width:281px;height:1px;background:#c0c0c0"></div>
<div class="a" style="left:67px;top:264px;width:260px;height:1px;background:#8f8f8f"></div>
<div class="a" style="left:118px;top:264px;width:53px;height:38px;background:#d6d6d6;border:1px solid #a0a0a0"></div>
<div class="a" style="left:170px;top:264px;width:53px;height:38px;background:#d6d6d6;border:1px solid #a0a0a0"></div>
<div class="a" style="left:222px;top:264px;width:53px;height:38px;background:#d6d6d6;border:1px solid #a0a0a0"></div>
<div class="a" style="left:274px;top:264px;width:53px;height:38px;background:#d6d6d6;border:1px solid #a0a0a0"></div>
<div class="a" style="left:67px;top:301px;width:281px;height:1px;background:#a8a8a8"></div>
<div class="a" style="left:67px;top:264px;width:52px;height:38px;background:#f7f7f7;border-top:1px solid #8f8f8f"></div>
<svg style="left:76px;top:264px" width="36" height="36" viewBox="0 0 36 36"><path d="M5.3,13.5 L10.3,16.3 L10.3,7.3 L16.3,10.2 L16.3,19.3 L22.3,22.6 L22.3,32.3 L5.3,21 Z" fill="#f6c820"/><polygon points="10.3,7.3 17.5,5 24.5,7.2 16.3,10.2" fill="#fff0a0"/><polygon points="16.3,10.2 24.5,7.2 24.5,16 16.3,19.3" fill="#f9e060"/><polygon points="16.3,19.3 24.5,16 29.5,18.6 22.3,22.6" fill="#fff0a0"/><polygon points="22.3,22.6 29.5,18.6 29.5,28 22.3,32.3" fill="#fbe45a"/><polygon points="5.3,13.5 8.5,12 10.3,13 10.3,16.3" fill="#fff0a0"/><path d="M5.3,13.5 L8.5,12 L10.3,13 M10.3,16.3 V7.3 L17.5,5 L24.5,7.2 V16 L29.5,18.6 V28 L22.3,32.3 L5.3,21 Z M10.3,7.3 L16.3,10.2 L24.5,7.2 M16.3,10.2 V19.3 L22.3,22.6 L29.5,18.6 M22.3,22.6 V32.3 M16.3,19.3 L24.5,16" fill="none" stroke="#5a4200" stroke-width="1.1" stroke-linejoin="round"/></svg>
<svg style="left:131px;top:269px" width="28" height="27" viewBox="0 0 28 27"><rect x="1" y="1" width="26" height="25" rx="1.5" fill="#f4f4f4" stroke="#333" stroke-width="1"/><rect x="1" y="1" width="26" height="4" fill="#3f8bbd"/><rect x="4" y="8" width="6" height="4" rx="1" fill="url(#bls)" stroke="#174a6e" stroke-width="0.6"/><rect x="4" y="14" width="6" height="4" rx="1" fill="url(#bls)" stroke="#174a6e" stroke-width="0.6"/><rect x="4" y="20" width="6" height="4" rx="1" fill="url(#bls)" stroke="#174a6e" stroke-width="0.6"/><path d="M12,10 H24 M12,16 H24 M12,22 H24" stroke="#333" stroke-width="0.9"/></svg>
<svg style="left:185px;top:268px" width="24" height="29" viewBox="0 0 24 29"><path d="M2,1 V28 M2,5 H9 M2,22 H12" stroke="#444" stroke-width="2.2" fill="none"/><rect x="9" y="1" width="11" height="11" fill="#eee" stroke="#333" stroke-width="1"/><rect x="12" y="16" width="11" height="12" fill="#eee" stroke="#333" stroke-width="1"/></svg>
<svg style="left:235px;top:268px" width="29" height="29" viewBox="0 0 29 29"><circle cx="14.5" cy="14.5" r="10" fill="none" stroke="#222" stroke-width="2"/><path d="M14.5,1 V28 M1,14.5 H28" stroke="#222" stroke-width="2"/></svg>
<svg style="left:287px;top:268px" width="28" height="28" viewBox="0 0 28 28"><defs><radialGradient id="ball" cx="0.35" cy="0.3" r="0.8"><stop offset="0" stop-color="#fff" stop-opacity="0.8"/><stop offset="0.3" stop-color="#fff" stop-opacity="0"/></radialGradient></defs><circle cx="14" cy="14" r="13" fill="#2f6fd0"/><path d="M14,14 L14,1 A13,13 0 0 1 27,14 Z" fill="#d03030"/><path d="M14,14 L27,14 A13,13 0 0 1 14,27 Z" fill="#e8c020"/><path d="M14,14 L14,27 A13,13 0 0 1 1,14 Z" fill="#2faa3a"/><circle cx="19" cy="10" r="6" fill="#111"/><circle cx="14" cy="14" r="13" fill="url(#ball)"/></svg>
<svg style="left:337px;top:271px" width="12" height="22" viewBox="0 0 12 22"><path d="M2.5,2 L10,11 L2.5,20" fill="none" stroke="#777" stroke-width="2.8" stroke-linecap="round"/></svg>
<div class="a" style="left:70px;top:302px;width:278px;height:38px;background:#f7f7f7;border:1px solid #cfcfcf"></div>
<svg style="left:75px;top:307px" width="27" height="29" viewBox="0 0 27 29"><rect x="1" y="1" width="25" height="5" rx="2" fill="#4aa0d2" stroke="#174a6e" stroke-width="0.8"/><path d="M1.5,6 L12,18 L12,28 L15,26 L15,18 L25.5,6 Z" fill="#f2f2f2" stroke="#444" stroke-width="1"/></svg>
<svg style="left:68px;top:338px" width="36" height="36" viewBox="0 0 36 36"><path d="M5.3,13.5 L10.3,16.3 L10.3,7.3 L16.3,10.2 L16.3,19.3 L22.3,22.6 L22.3,32.3 L5.3,21 Z" fill="#f6c820"/><polygon points="10.3,7.3 17.5,5 24.5,7.2 16.3,10.2" fill="#fff0a0"/><polygon points="16.3,10.2 24.5,7.2 24.5,16 16.3,19.3" fill="#f9e060"/><polygon points="16.3,19.3 24.5,16 29.5,18.6 22.3,22.6" fill="#fff0a0"/><polygon points="22.3,22.6 29.5,18.6 29.5,28 22.3,32.3" fill="#fbe45a"/><polygon points="5.3,13.5 8.5,12 10.3,13 10.3,16.3" fill="#fff0a0"/><path d="M5.3,13.5 L8.5,12 L10.3,13 M10.3,16.3 V7.3 L17.5,5 L24.5,7.2 V16 L29.5,18.6 V28 L22.3,32.3 L5.3,21 Z M10.3,7.3 L16.3,10.2 L24.5,7.2 M16.3,10.2 V19.3 L22.3,22.6 L29.5,18.6 M22.3,22.6 V32.3 M16.3,19.3 L24.5,16" fill="none" stroke="#5a4200" stroke-width="1.1" stroke-linejoin="round"/></svg>
<div class="a" style="left:104px;top:340px;width:245px;height:30px;overflow:hidden"><div class="t tr" style="left:1px;top:7px;">零件10&nbsp;&nbsp;(預設&lt;&lt;預設&gt;_顯示狀態-1&gt;)</div></div>
<svg style="left:80px;top:382px" width="8" height="12" viewBox="0 0 8 12"><polygon points="1,0 7,6 1,12" fill="#555"/></svg>
<svg style="left:104px;top:373px" width="31" height="31" viewBox="0 0 31 31"><path d="M1,4 L1,28 L28,28 L28,8 L13,8 L11,4 Z" fill="url(#gr)" stroke="#444" stroke-width="1"/><circle cx="15" cy="18" r="7" fill="#fff" stroke="#333" stroke-width="1.2"/><path d="M15,13 V18 L18,20" stroke="#333" stroke-width="1.2" fill="none"/><path d="M6,17 L10,13 L11,19" fill="#2f7fac"/></svg>
<div class="t tr" style="left:140px;top:379px;">歷程</div>
<svg style="left:104px;top:405px" width="31" height="31" viewBox="0 0 31 31"><path d="M1,4 L1,28 L28,28 L28,8 L13,8 L11,4 Z" fill="url(#gr)" stroke="#444" stroke-width="1"/><circle cx="15" cy="18" r="7.5" fill="#fff" stroke="#333" stroke-width="1.2"/><path d="M15,18 L20,21" stroke="#d02020" stroke-width="2"/></svg>
<div class="t tr" style="left:140px;top:411px;">感測器</div>
<svg style="left:80px;top:446px" width="8" height="12" viewBox="0 0 8 12"><polygon points="1,0 7,6 1,12" fill="#555"/></svg>
<svg style="left:104px;top:437px" width="31" height="31" viewBox="0 0 31 31"><path d="M1,4 L1,28 L28,28 L28,8 L13,8 L11,4 Z" fill="url(#gr)" stroke="#444" stroke-width="1"/><text x="15" y="27" font-size="19" font-family="Liberation Serif" font-weight="bold" text-anchor="middle" fill="#2f7fac" stroke="#174a6e" stroke-width="0.5">A</text></svg>
<div class="t tr" style="left:140px;top:443px;">註記</div>
<svg style="left:104px;top:469px" width="31" height="31" viewBox="0 0 31 31"><circle cx="4" cy="4" r="3" fill="#ccc" stroke="#666" stroke-width="0.7"/><circle cx="4" cy="14" r="3" fill="url(#bls)"/><circle cx="4" cy="24" r="3" fill="#e2b400"/><path d="M9,3 H27 M9,13 H24 M9,22 H14" stroke="#222" stroke-width="2.4"/><circle cx="21" cy="23" r="5" fill="#333"/><circle cx="21" cy="23" r="2" fill="#f7f7f7"/><path d="M21,16 V30 M14,23 H28 M16,18 L26,28 M26,18 L16,28" stroke="#333" stroke-width="1.8"/></svg>
<div class="t tr" style="left:140px;top:475px;">材質 &lt;未指定&gt;</div>
<svg style="left:104px;top:501px" width="31" height="31" viewBox="0 0 31 31"><polygon points="6.5,9 24.5,2.5 24.5,20 6.5,27" fill="#fbfbfb" stroke="#333" stroke-width="1"/><path d="M15.5,0 V33" stroke="#333" stroke-width="1" stroke-dasharray="3 2"/></svg>
<div class="t tr" style="left:140px;top:507px;">前基準面</div>
<svg style="left:104px;top:533px" width="31" height="31" viewBox="0 0 31 31"><polygon points="6.5,9 24.5,2.5 24.5,20 6.5,27" fill="#fbfbfb" stroke="#333" stroke-width="1"/><path d="M15.5,0 V33" stroke="#333" stroke-width="1" stroke-dasharray="3 2"/></svg>
<div class="t tr" style="left:140px;top:539px;">上基準面</div>
<svg style="left:104px;top:565px" width="31" height="31" viewBox="0 0 31 31"><polygon points="6.5,9 24.5,2.5 24.5,20 6.5,27" fill="#fbfbfb" stroke="#333" stroke-width="1"/><path d="M15.5,0 V33" stroke="#333" stroke-width="1" stroke-dasharray="3 2"/></svg>
<div class="t tr" style="left:140px;top:571px;">右基準面</div>
<svg style="left:104px;top:597px" width="31" height="31" viewBox="0 0 31 31"><path d="M5,3 V27 H27" stroke="#111" stroke-width="2" fill="none"/><polygon points="1,7 5,0 9,7" fill="#111"/><polygon points="23,23 30,27 23,31" fill="#111"/><rect x="2" y="24" width="6" height="6" fill="#111"/></svg>
<div class="t tr" style="left:140px;top:603px;">原點</div>
<svg style="left:80px;top:638px" width="8" height="12" viewBox="0 0 8 12"><polygon points="1,0 7,6 1,12" fill="#555"/></svg>
<svg style="left:104px;top:629px" width="31" height="31" viewBox="0 0 31 31"><polygon points="14,4 22,1 29,5 29,27 21,28 14,24" fill="url(#gr)" stroke="#444" stroke-width="1"/><path d="M21,6 V28" stroke="#777" stroke-width="0.8"/><polygon points="1,12 14,9 18,11 18,21 5,25 1,22" fill="url(#bls)" stroke="#174a6e" stroke-width="1"/><polygon points="1,12 14,9 18,11 5,14" fill="#8fd0ee" stroke="#174a6e" stroke-width="0.8"/></svg>
<div class="t tr" style="left:140px;top:635px;">填料-伸長1</div>
<svg style="left:80px;top:670px" width="8" height="12" viewBox="0 0 8 12"><polygon points="1,0 7,6 1,12" fill="#555"/></svg>
<svg style="left:104px;top:661px" width="31" height="31" viewBox="0 0 31 31"><polygon points="3,5 21,1 26,4 26,24 8,28 3,25" fill="url(#gr)" stroke="#444" stroke-width="1"/><polygon points="8,8 21,5 21,21 8,24" fill="#fff" stroke="#444" stroke-width="1"/><polygon points="11,11 19,9 19,19 11,21" fill="#5eaad6" stroke="#174a6e" stroke-width="0.8"/></svg>
<div class="t tr" style="left:140px;top:667px;">除料-伸長1</div>
<svg style="left:104px;top:693px" width="31" height="31" viewBox="0 0 31 31"><g transform="translate(3,1)"><path d="M1,6 L6,8 C 8,9 9,12 9,16 L9,27 L1,22 Z" fill="url(#gr)" stroke="#333" stroke-width="1" stroke-linejoin="round"/><path d="M9,16 L24,10 L24,23 L9,27 Z" fill="#f4f4f4" stroke="#333" stroke-width="1" stroke-linejoin="round"/><path d="M1,6 L14,1 L19,3 L6,8 Z" fill="#f0f0f0" stroke="#333" stroke-width="1" stroke-linejoin="round"/><path d="M6,8 L19,3 C 22,4 24,7 24,10 L9,16 C 9,12 8,9 6,8 Z" fill="url(#bls)" stroke="#174a6e" stroke-width="1" stroke-linejoin="round"/></g></svg>
<div class="t tr" style="left:140px;top:699px;">圓角1</div>
<div class="a" style="left:101px;top:724px;width:132px;height:32px;background:#a9cbe7;border:1px solid #6aa3d5"></div>
<svg style="left:80px;top:734px" width="8" height="12" viewBox="0 0 8 12"><polygon points="1,0 7,6 1,12" fill="#555"/></svg>
<svg style="left:104px;top:725px" width="31" height="31" viewBox="0 0 31 31"><polygon points="14,4 22,1 29,5 29,27 21,28 14,24" fill="url(#gr)" stroke="#444" stroke-width="1"/><path d="M21,6 V28" stroke="#777" stroke-width="0.8"/><polygon points="1,12 14,9 18,11 18,21 5,25 1,22" fill="url(#bls)" stroke="#174a6e" stroke-width="1"/><polygon points="1,12 14,9 18,11 5,14" fill="#8fd0ee" stroke="#174a6e" stroke-width="0.8"/></svg>
<div class="t tr" style="left:140px;top:731px;">填料-伸長2</div>
<div class="a" style="left:67px;top:756px;width:282px;height:3px;background:linear-gradient(#3a6fd0,#1a3aa8)"></div>
<div class="a" style="left:350px;top:242px;width:1px;height:726px;background:#7f7f7f"></div>
<div class="a" style="left:350px;top:570px;width:8px;height:37px;background:#f7f7f7;border:1px solid #7f7f7f;border-left:none"></div>
<div class="a" style="left:351px;top:584px;width:6px;height:6px;border-radius:50%;border:1px solid #999"></div>
<svg style="left:7px;top:258px" width="30" height="30" viewBox="0 0 30 30"><path d="M2,16 C 5,11 9,12 12,12 C 16,12 18,7 22,6 L27,11 C 24,14 22,19 17,20 C 13,21 11,22 8,27 Z" fill="url(#bls)" stroke="#1d5a84" stroke-width="1"/><path d="M7,13 C 9,17 9,22 8,27 M12,12 C 14,15 15,18 17,20" fill="none" stroke="#a5d8f0" stroke-width="1"/><path d="M20,2 L27,9" stroke="#111" stroke-width="2.6"/><polygon points="22,11 30,11 30,3" fill="#111"/></svg>
<svg style="left:7px;top:297px" width="30" height="30" viewBox="0 0 30 30"><path d="M12,4 C 20,1 28,5 28,14 C 28,24 18,29 10,26 C 4,24 1,18 2,13 L7,15 C 7,20 11,23 16,22 C 22,21 24,15 22,10 C 20,6 15,6 12,8 Z" fill="url(#bls)" stroke="#1d5a84" stroke-width="1"/><path d="M9,4 C 11,3 13,3 14,4 L12,9 C 10,8 8,8 6,9 Z" fill="#8fd0ee" stroke="#1d5a84" stroke-width="0.8"/><path d="M6,12 L22,22" stroke="#333" stroke-width="0.9"/></svg>
<svg style="left:7px;top:334px" width="30" height="30" viewBox="0 0 30 30"><path d="M2,22 C 3,28 10,30 13,25 L18,12 C 19,9 22,8 25,9 L28,14 C 26,13 23,13 22,16 L17,27 C 14,32 4,31 1,25 Z" fill="url(#bls)" stroke="#1d5a84" stroke-width="1"/><path d="M2,22 L6,19 L8,23 M18,7 C 21,4 26,4 29,8 L28,14" fill="none" stroke="#1d5a84" stroke-width="1"/><path d="M18,8 C 21,5 25,5 28,8 C 26,9 23,9 22,11 Z" fill="#8fd0ee" stroke="#1d5a84" stroke-width="0.8"/></svg>
<svg style="left:7px;top:374px" width="30" height="30" viewBox="0 0 30 30"><path d="M8,1 H22 L22,12 L28,20 L15,28 L2,20 L8,12 Z" fill="url(#bls)" stroke="#1d5a84" stroke-width="1"/><path d="M15,2 V28" stroke="#2f6f9a" stroke-width="0.8"/></svg>
<svg style="left:7px;top:411px" width="30" height="30" viewBox="0 0 30 30"><path d="M2,12 C 4,9 7,9 9,11 C 11,13 13,14 16,11 L21,5 C 23,3 26,4 28,7 L27,11 C 24,14 22,19 17,21 L12,25 C 10,27 8,27 6,25 Z" fill="url(#bls)" stroke="#1d5a84" stroke-width="1"/><path d="M7,10 C 9,15 9,20 8,25 M19,7 C 21,11 21,16 19,20" fill="none" stroke="#1d5a84" stroke-width="1"/></svg>
<svg style="left:7px;top:450px" width="30" height="30" viewBox="0 0 30 30"><path d="M2,14 C 5,11 9,12 12,11 C 16,10 18,6 21,5 L29,13 C 26,16 24,20 19,21 C 15,22 13,22 9,27 Z" fill="#f0f0f0" stroke="#333" stroke-width="1.1"/><path d="M8,15 C 11,14 14,15 16,13 C 18,11 19,9 21,9 L25,13 C 23,15 21,18 18,18 C 15,19 13,19 11,21 Z" fill="url(#bls)" stroke="#1d5a84" stroke-width="0.9"/></svg>
<svg style="left:7px;top:489px" width="30" height="30" viewBox="0 0 30 30"><polygon points="6,7.5 24,1 24,18 6,25" fill="url(#bls)" stroke="#1d5a84" stroke-width="1"/></svg>
<svg style="left:7px;top:525px" width="30" height="30" viewBox="0 0 30 30"><path d="M4,18 V25 C 4,30 27,30 27,25 V18 Z" fill="url(#gr)" stroke="#333" stroke-width="1"/><ellipse cx="15.5" cy="18" rx="11.5" ry="5" fill="url(#bls)" stroke="#1d5a84" stroke-width="1"/><path d="M5,17 C 6,12 10,12 12,10 C 14,9 14,8 15,6 C 17,10 24,10 26,16" fill="url(#bls)" stroke="#1d5a84" stroke-width="1"/><path d="M11,12 V1" stroke="#111" stroke-width="2"/><polygon points="7,5 11,0 15,5" fill="#111"/></svg>
<svg style="left:7px;top:563px" width="30" height="30" viewBox="0 0 30 30"><path d="M2,17 L15,12 L28,17 L28,23 L15,29 L2,23 Z" fill="url(#gr)" stroke="#333" stroke-width="1"/><path d="M2,17 C 6,11 12,10 15,12 L28,17 L15,21 Z" fill="#e8e8e8" stroke="#333" stroke-width="1"/><path d="M15,21 V29" stroke="#333" stroke-width="1"/><path d="M2,9 C 8,2 18,1 28,9 C 20,6 12,7 6,14 Z" fill="url(#bls)" stroke="#1d5a84" stroke-width="0.9"/></svg>
<svg style="left:7px;top:602px" width="30" height="30" viewBox="0 0 30 30"><path d="M2,16 H11 C 17,16 20,11 20,5 V2 H29 V8 C 29,20 20,27 9,27 H2 Z" fill="url(#gr)" stroke="#333" stroke-width="1.1"/><path d="M10,16 L12,27 M16,14 L22,23 M19,9 L28,14" stroke="#2f7fac" stroke-width="1.4"/></svg>
<svg style="left:7px;top:639px" width="30" height="30" viewBox="0 0 30 30"><polygon points="3,7 14,2 27,7 27,22 16,28 3,23" fill="#f2f2f2" stroke="#333" stroke-width="1"/><polygon points="3,7 14,2 27,7 16,11" fill="#fafafa" stroke="#333" stroke-width="0.9"/><polygon points="16,11 27,7 27,22 16,28" fill="url(#bls)" stroke="#1d5a84" stroke-width="1"/><path d="M18.5,14.5 L24.5,21.5 M24.5,14.5 L18.5,21.5" stroke="#111" stroke-width="2.8"/></svg>
<svg style="left:7px;top:676px" width="30" height="30" viewBox="0 0 30 30"><path d="M2,19 L15,15 L28,19 L28,25 L15,29 L2,25 Z" fill="url(#gr)" stroke="#333" stroke-width="1"/><path d="M2,19 L15,15 L28,19 L15,23 Z" fill="#ececec" stroke="#333" stroke-width="0.9"/><path d="M15,23 V29" stroke="#333"/><path d="M3,5 C 8,3 14,6 19,4 L27,8 C 24,10 22,13 18,14 L8,16 C 8,12 6,8 3,5 Z" fill="url(#bls)" stroke="#1d5a84" stroke-width="0.9"/></svg>
<svg style="left:7px;top:714px" width="30" height="30" viewBox="0 0 30 30"><path d="M3,4 C 5,2 8,2 10,2 L15,9 L20,2 C 22,2 25,2 27,4 L26,10 V27 C 26,28 25,29 24,29 H6 C 5,29 4,28 4,27 V10 Z" fill="url(#gr)" stroke="#333" stroke-width="1.1"/><path d="M10,2 L15,9 L20,2" fill="none" stroke="#2f7fac" stroke-width="1.3"/><path d="M15,9 V29" stroke="#2f7fac" stroke-width="1.2"/><path d="M12,12 L18,14 M12,16 L18,18 M12,20 L18,22 M12,24 L18,26" stroke="#2f7fac" stroke-width="1.2"/></svg>
<div class="a" style="left:5px;top:750px;width:60px;height:1px;background:#888"></div>
<svg style="left:7px;top:762px" width="30" height="30" viewBox="0 0 30 30"><path d="M2,16 C 5,11 9,12 12,12 C 16,12 18,7 22,6 L27,11 C 24,14 22,19 17,20 C 13,21 11,22 8,27 Z" fill="#ececec" stroke="#cfcfcf" stroke-width="1"/><path d="M18,20 L25,26 M21,26 H26 V21" stroke="#c8c8c8" stroke-width="1.6" fill="none"/></svg>
<svg style="left:7px;top:800px" width="30" height="30" viewBox="0 0 30 30"><path d="M2,16 C 5,11 9,12 12,12 C 16,12 18,7 22,6 L28,12 C 25,15 22,19 17,20 C 13,21 11,22 8,26 Z" fill="#ececec" stroke="#cfcfcf" stroke-width="1"/></svg>
<svg style="left:7px;top:838px" width="30" height="30" viewBox="0 0 30 30"><path d="M2,17 C 5,12 9,13 12,13 C 16,13 18,8 22,7 L28,13 C 25,16 22,20 17,21 C 13,22 11,23 8,27 Z" fill="#ececec" stroke="#cfcfcf" stroke-width="1"/></svg>
<svg style="left:7px;top:875px" width="30" height="30" viewBox="0 0 30 30"><g transform="translate(3,1)"><path d="M1,6 L6,8 C 8,9 9,12 9,16 L9,27 L1,22 Z" fill="url(#gr)" stroke="#333" stroke-width="1" stroke-linejoin="round"/><path d="M9,16 L24,10 L24,23 L9,27 Z" fill="#f4f4f4" stroke="#333" stroke-width="1" stroke-linejoin="round"/><path d="M1,6 L14,1 L19,3 L6,8 Z" fill="#f0f0f0" stroke="#333" stroke-width="1" stroke-linejoin="round"/><path d="M6,8 L19,3 C 22,4 24,7 24,10 L9,16 C 9,12 8,9 6,8 Z" fill="url(#bls)" stroke="#174a6e" stroke-width="1" stroke-linejoin="round"/></g></svg>
<svg style="left:7px;top:912px" width="30" height="30" viewBox="0 0 30 30"><circle cx="5" cy="5" r="4.3" fill="url(#bls)" stroke="#174a6e" stroke-width="0.8"/><polygon points="11,9 27,4 27,19 11,24" fill="url(#bl)" stroke="#174a6e" stroke-width="1"/><path d="M19,2 V28" stroke="#111" stroke-width="1" stroke-dasharray="4 2"/></svg>
<div class="dd" style="left:53px;top:924px"></div>
<div class="a" style="left:67px;top:942px;width:282px;height:25px;background:#f0f0f0"></div>
<div class="a" style="left:92px;top:942px;width:196px;height:25px;background:#cdcdcd"></div>
<svg style="left:73px;top:947px" width="12" height="15" viewBox="0 0 12 15"><path d="M9,1.5 L3,7.5 L9,13.5" fill="none" stroke="#555" stroke-width="2"/></svg>
<svg style="left:331px;top:947px" width="12" height="15" viewBox="0 0 12 15"><path d="M3,1.5 L9,7.5 L3,13.5" fill="none" stroke="#555" stroke-width="2"/></svg>
<!-- ============ HEADS-UP ============ -->
<div class="a" style="left:711px;top:208px;width:1209px;height:1px;background:#9a9a9a"></div>
<div class="a" style="left:1919px;top:209px;width:1px;height:784px;background:#1f5fd0"></div>
<svg style="left:895px;top:216px" width="28" height="28" viewBox="0 0 28 28"><circle cx="17" cy="11" r="9.5" fill="#e9e9e9" stroke="#666" stroke-width="1.3"/><path d="M17,4 L14,7.5 H20 Z M17,18 L14,14.5 H20 Z M10,11 L13.5,8 V14 Z M24,11 L20.5,8 V14 Z" fill="#444"/><path d="M10,18 L2,26" stroke="#2f7fac" stroke-width="4.5" stroke-linecap="round"/></svg>
<svg style="left:932px;top:215px" width="30" height="30" viewBox="0 0 30 30"><rect x="10" y="1" width="19" height="19" fill="none" stroke="#333" stroke-width="1.1" stroke-dasharray="2.5 1.5"/><circle cx="17" cy="12" r="9" fill="#dfe6ea" stroke="#666" stroke-width="1.3"/><path d="M10,19 L3,27" stroke="#2f7fac" stroke-width="4.5" stroke-linecap="round"/></svg>
<svg style="left:970px;top:215px" width="30" height="30" viewBox="0 0 30 30"><path d="M2,17 L15,6 L21,13 L9,26 Z" fill="url(#gr)" stroke="#666" stroke-width="1"/><path d="M15,6 L21,2 L26,7 L21,13 Z" fill="#e8e8e8" stroke="#666" stroke-width="1"/><path d="M21,2 L24,0 L28,4 L26,7 Z" fill="#ddd" stroke="#666" stroke-width="0.9"/><ellipse cx="5.5" cy="21.5" rx="6" ry="4.8" transform="rotate(-45 5.5 21.5)" fill="#d8d8d8" stroke="#666" stroke-width="1"/><ellipse cx="5.5" cy="21.5" rx="3.3" ry="2.5" transform="rotate(-45 5.5 21.5)" fill="#bbb" stroke="#888" stroke-width="0.7"/><path d="M13,19 L20,13 V16 H29 V22 H20 V25 Z" fill="#4fa0d4" stroke="#2a6a94" stroke-width="0.8"/></svg>
<svg style="left:1008px;top:215px" width="30" height="30" viewBox="0 0 30 30"><path d="M1,7 C 1,0 29,0 29,7 L29,25 L21,28 L21,13 C 21,9 9,9 9,13 L9,28 L1,25 Z" fill="url(#gr)" stroke="#666" stroke-width="1"/><path d="M1,8 L9,12 L9,28 L1,25 Z M21,12 L29,8 L29,25 L21,28 Z" fill="#6ab4de" stroke="#2a6a94" stroke-width="0.9"/><path d="M2,15 L8,11 M2,21 L8,16 M2,26 L8,22 M22,19 L28,13 M22,25 L28,19" stroke="#2a6a94" stroke-width="0.9"/><path d="M9,13 C 9,9 21,9 21,13 L21,15 C 21,12 9,12 9,15 Z" fill="#bbb"/></svg>
<svg style="left:1045px;top:213px" width="32" height="33" viewBox="0 0 32 33"><path d="M9,1 H18 L13,6 H17 L4,15 L8,8 H4 Z" fill="#f0a020" stroke="#c04010" stroke-width="0.8"/><g transform="translate(2,4)"><path d="M2,17 L15,6 L21,13 L9,26 Z" fill="url(#gr)" stroke="#666" stroke-width="1"/><path d="M15,6 L21,2 L26,7 L21,13 Z" fill="#e8e8e8" stroke="#666" stroke-width="1"/><path d="M21,2 L24,0 L28,4 L26,7 Z" fill="#ddd" stroke="#666" stroke-width="0.9"/><ellipse cx="5.5" cy="21.5" rx="6" ry="4.8" transform="rotate(-45 5.5 21.5)" fill="#d8d8d8" stroke="#666" stroke-width="1"/><ellipse cx="5.5" cy="21.5" rx="3.3" ry="2.5" transform="rotate(-45 5.5 21.5)" fill="#bbb" stroke="#888" stroke-width="0.7"/></g><text x="23" y="32" font-size="19" font-family="Liberation Serif" font-weight="bold" text-anchor="middle" fill="#3a8fc4" stroke="#1d5a84" stroke-width="0.5">A</text></svg>
<svg style="left:1084px;top:215px" width="30" height="30" viewBox="0 0 30 30"><path d="M9,1 L28,1 L28,20 L20,28 L1,28 L1,9 Z" fill="#eee" stroke="#444" stroke-width="1"/><path d="M9,1 L1,9 M28,1 L20,9" stroke="#444" stroke-width="1"/><rect x="1" y="9" width="19" height="19" fill="url(#bl)" stroke="#174a6e" stroke-width="1"/><path d="M14,3 V8 M21,15 H27" stroke="#222" stroke-width="1.4"/></svg>
<div class="dd" style="left:1121px;top:229px;border-top-color:#8a8a8a"></div>
<svg style="left:1138px;top:215px" width="26" height="29" viewBox="0 0 26 29"><polygon points="1,6 13,1 25,5 25,23 13,28 1,24" fill="#f0f0f0" stroke="#444" stroke-width="1"/><polygon points="1,6 13,1 19,3 7,8" fill="#9dd3ee"/><polygon points="1,6 7,8 7,27 1,24" fill="#5eaad6"/><polygon points="7,8 13,10 13,28 7,27" fill="#7cc0e6"/><path d="M1,6 L13,10 L25,5 M13,10 V28" stroke="#444" stroke-width="1" fill="none"/></svg>
<div class="dd" style="left:1173px;top:229px;border-top-color:#8a8a8a"></div>
<svg style="left:1187px;top:218px" width="30" height="24" viewBox="0 0 30 24"><path d="M1,12 C 8,1 22,1 29,12 C 22,23 8,23 1,12 Z" fill="#e6e6e6" stroke="#999" stroke-width="1.5"/><circle cx="15" cy="12" r="7" fill="#555"/><circle cx="13" cy="10" r="2" fill="#aaa"/><path d="M15,1 V23" stroke="#333" stroke-width="2"/></svg>
<div class="dd" style="left:1225px;top:229px;border-top-color:#8a8a8a"></div>
<svg style="left:1239px;top:214px" width="32" height="32" viewBox="0 0 32 32"><circle cx="13" cy="13" r="12.5" fill="#2f6fd0"/><path d="M13,13 V0.5 A12.5,12.5 0 0 1 25.5,13 Z" fill="#d03838"/><path d="M13,13 H25.5 A12.5,12.5 0 0 1 13,25.5 Z" fill="#e8c020"/><path d="M13,13 V25.5 A12.5,12.5 0 0 1 0.5,13 Z" fill="#2faa3a"/><circle cx="13" cy="13" r="12.5" fill="url(#ball)"/><path d="M16,28 L27,15 L31,18 L20,30 L15,31 Z" fill="#f0c030" stroke="#333" stroke-width="0.9"/><path d="M27,15 L31,18" stroke="#c03030" stroke-width="2.5"/></svg>
<svg style="left:1278px;top:214px" width="30" height="31" viewBox="0 0 30 31"><rect x="1" y="13" width="28" height="17" fill="#333"/><path d="M3,22 H8 L6,29 H1 Z M12,22 H18 L18,29 H12 Z M22,22 H27 L29,29 H24 Z" fill="#eee"/><circle cx="15" cy="11" r="10.5" fill="#2f6fd0"/><path d="M15,11 V0.5 A10.5,10.5 0 0 1 25.5,11 Z" fill="#d03838"/><path d="M15,11 H25.5 A10.5,10.5 0 0 1 15,21.5 Z" fill="#e8c020"/><path d="M15,11 V21.5 A10.5,10.5 0 0 1 4.5,11 Z" fill="#2faa3a"/><circle cx="15" cy="11" r="10.5" fill="url(#ball)"/></svg>
<div class="dd" style="left:1315px;top:229px;border-top-color:#8a8a8a"></div>
<svg style="left:1331px;top:217px" width="28" height="25" viewBox="0 0 28 25"><rect x="1" y="1" width="26" height="17" fill="url(#gr)" stroke="#555" stroke-width="1.5"/><path d="M14,18 V22 M8,23.5 H20" stroke="#555" stroke-width="2"/></svg>
<div class="dd" style="left:1367px;top:229px;border-top-color:#8a8a8a"></div>
<svg style="left:1733px;top:218px" width="20" height="23" viewBox="0 0 20 23"><rect x="1" y="1" width="18" height="21" fill="none" stroke="#8c8c8c" stroke-width="1.2"/><path d="M1,2 H19" stroke="#8c8c8c" stroke-width="2"/><polygon points="1.5,11.5 5,8 5,15" fill="#8c8c8c"/></svg>
<svg style="left:1771px;top:218px" width="20" height="23" viewBox="0 0 20 23"><rect x="1" y="1" width="18" height="21" fill="none" stroke="#8c8c8c" stroke-width="1.2"/><path d="M1,2 H19" stroke="#8c8c8c" stroke-width="2"/><polygon points="18.5,11.5 15,8 15,15" fill="#8c8c8c"/></svg>
<div class="a" style="left:1811px;top:237px;width:16px;height:3px;background:#8c8c8c"></div>
<svg style="left:1846px;top:221px" width="22" height="19" viewBox="0 0 22 19"><path d="M6,5 V1 H20 V12 H15" fill="none" stroke="#8c8c8c" stroke-width="1.2"/><rect x="1" y="5.5" width="14" height="12.5" fill="none" stroke="#8c8c8c" stroke-width="1.2"/><path d="M1,6 H15 M6,1.5 H20" stroke="#8c8c8c" stroke-width="1.8"/></svg>
<svg style="left:1886px;top:221px" width="18" height="18" viewBox="0 0 18 18"><path d="M1,1 L17,17 M17,1 L1,17" stroke="#8c8c8c" stroke-width="1.2"/></svg>
<div class="a" style="left:1880px;top:277px;width:40px;height:35px;background:#dedede;border:1px solid #9e9e9e;border-right:none"></div>
<div class="a" style="left:1880px;top:311px;width:40px;height:37px;background:#dedede;border:1px solid #9e9e9e;border-right:none"></div>
<div class="a" style="left:1880px;top:347px;width:40px;height:37px;background:#f7f7f7;border:1px solid #9e9e9e;border-right:none"></div>
<div class="a" style="left:1880px;top:383px;width:40px;height:37px;background:#dedede;border:1px solid #9e9e9e;border-right:none"></div>
<div class="a" style="left:1880px;top:419px;width:40px;height:37px;background:#dedede;border:1px solid #9e9e9e;border-right:none"></div>
<div class="a" style="left:1880px;top:455px;width:40px;height:37px;background:#dedede;border:1px solid #9e9e9e;border-right:none"></div>
<div class="a" style="left:1880px;top:491px;width:40px;height:37px;background:#dedede;border:1px solid #9e9e9e;border-right:none"></div>
<svg style="left:1885px;top:280px" width="30" height="28" viewBox="0 0 30 28"><path d="M3,26 V13 L15,3 L27,13 V26 Z" fill="url(#gr)" stroke="#333" stroke-width="1"/><path d="M1,13 L15,1.5 L29,13" fill="none" stroke="#2f7fac" stroke-width="3"/><rect x="12.5" y="17" width="6" height="9" fill="#fff" stroke="#333" stroke-width="1"/></svg>
<svg style="left:1886px;top:315px" width="28" height="28" viewBox="0 0 28 28"><path d="M2,8 L8,4 V26 L2,22 Z" fill="#ddd" stroke="#444"/><path d="M8,4 C 10,2 13,2 14,4 V26 H8 Z M14,4 C 16,2 19,2 20,4 V26 H14 Z M20,4 C 22,2 25,2 26,4 V26 H20 Z" fill="url(#gr)" stroke="#444" stroke-width="1"/></svg>
<svg style="left:1884px;top:353px" width="32" height="26" viewBox="0 0 32 26"><path d="M2,2 H11 L13,5 H26 V24 H2 Z" fill="#cfcfcf" stroke="#444" stroke-width="1"/><path d="M2,24 L8,11 H31 L26,24 Z" fill="url(#gr)" stroke="#444" stroke-width="1"/></svg>
<svg style="left:1886px;top:389px" width="28" height="26" viewBox="0 0 28 26"><rect x="1" y="1" width="26" height="24" fill="#f4f4f4" stroke="#333" stroke-width="1"/><rect x="4" y="4" width="9" height="6" fill="#f2c000" stroke="#7a6000" stroke-width="0.7"/><rect x="15" y="4" width="9" height="6" fill="#f2c000" stroke="#7a6000" stroke-width="0.7"/><path d="M4,20 V16 H8 V12 H11 V16 H13 V20 Z" fill="#f2c000" stroke="#7a6000" stroke-width="0.7"/><rect x="16" y="15" width="9" height="8" fill="#ccc" stroke="#777" stroke-width="0.7"/></svg>
<svg style="left:1886px;top:423px" width="28" height="28" viewBox="0 0 28 28"><circle cx="14" cy="14" r="13" fill="#2f6fd0"/><path d="M14,14 V1 A13,13 0 0 1 27,14 Z" fill="#d03838"/><path d="M14,14 H27 A13,13 0 0 1 14,27 Z" fill="#e8c020"/><path d="M14,14 V27 A13,13 0 0 1 1,14 Z" fill="#2faa3a"/><circle cx="14" cy="14" r="13" fill="url(#ball)"/></svg>
<svg style="left:1886px;top:460px" width="28" height="26" viewBox="0 0 28 26"><rect x="1" y="1" width="26" height="24" rx="1.5" fill="#f4f4f4" stroke="#333" stroke-width="1"/><rect x="1" y="1" width="26" height="4" fill="#3f8bbd"/><rect x="4" y="8" width="6" height="4" rx="1" fill="#3f8bbd"/><rect x="4" y="14" width="6" height="4" rx="1" fill="#3f8bbd"/><rect x="4" y="20" width="6" height="3.5" rx="1" fill="#3f8bbd"/><path d="M12,10 H24 M12,16 H24 M12,22 H24" stroke="#333" stroke-width="0.9"/></svg>
<svg style="left:1890px;top:501px" width="20" height="16" viewBox="0 0 20 16"><path d="M1,1 H12 V9 H6 L3,12 V9 H1 Z" fill="#4fa0d4" stroke="#2a6a94" stroke-width="0.8"/><path d="M7,5 H19 V13 H17 V15 L14,13 H7 Z" fill="#f4f4f4" stroke="#444" stroke-width="0.9"/></svg>
<svg style="left:360px;top:835px" width="110" height="90" viewBox="360 835 110 90"><defs><linearGradient id="tg" x1="0" x2="1"><stop offset="0" stop-color="#1f6e1f"/><stop offset="0.5" stop-color="#5fc05f"/><stop offset="1" stop-color="#1f6e1f"/></linearGradient><linearGradient id="tb" x1="0" y1="0" x2="0" y2="1"><stop offset="0" stop-color="#5a5aff"/><stop offset="1" stop-color="#1a1aa0"/></linearGradient><linearGradient id="tr" x1="0" y1="0" x2="0" y2="1"><stop offset="0" stop-color="#ff6a6a"/><stop offset="1" stop-color="#a01a1a"/></linearGradient></defs><path d="M411.5,888 V867" stroke="#1d6b1d" stroke-width="6"/><polygon points="404.5,863 411.5,853 418.5,863 411.5,870" fill="url(#tg)"/><path d="M411.5,888 L391,900" stroke="#1a1aa8" stroke-width="6"/><polygon points="381,909 384,898 390,895 395,904" fill="url(#tb)"/><path d="M411.5,888 L432,900" stroke="#a81a1a" stroke-width="6"/><polygon points="444,909 441,898 435,895 430,904" fill="url(#tr)"/><text x="413" y="853" font-size="18" font-family="Liberation Serif" fill="#16a016" text-anchor="middle">Y</text><text x="377" y="918" font-size="18" font-family="Liberation Serif" font-style="italic" fill="#1a1aff" text-anchor="middle">Z</text><text x="448" y="918" font-size="18" font-family="Liberation Serif" fill="#ff1a1a" text-anchor="middle">X</text></svg>
<div class="t vl" style="left:364px;top:947px;letter-spacing:0.6px">*等角視</div>
<!-- ============ BOTTOM TABS ============ -->
<div class="a" style="left:0px;top:968px;width:1919px;height:25px;background:#f7f7f7"></div>
<div class="a" style="left:351px;top:967px;width:1569px;height:1px;background:#9a9a9a"></div>
<div class="a" style="left:0px;top:990px;width:65px;height:1px;background:#a0a0a0"></div>
<svg style="left:28px;top:970px" width="12" height="14" viewBox="0 0 12 14"><path d="M2,2 L6,6 L10,2 M2,8 L6,12 L10,8" fill="none" stroke="#444" stroke-width="1.5"/></svg>
<div class="a" style="left:66px;top:968px;width:2px;height:25px;background:#8aa4b4"></div>
<div class="a" style="left:94px;top:968px;width:97px;height:25px;background:#a7a9c2;border:1px solid #7f82a0;border-top:2px solid #333"></div>
<div class="a" style="left:94px;top:969px;width:24px;height:24px;border-right:1px solid #8e90aa"></div>
<div class="a" style="left:118px;top:969px;width:24px;height:24px;border-right:1px solid #8e90aa"></div>
<div class="a" style="left:142px;top:969px;width:24px;height:24px;border-right:1px solid #8e90aa"></div>
<div class="a" style="left:166px;top:969px;width:24px;height:24px;border-right:1px solid #8e90aa"></div>
<svg style="left:94px;top:968px" width="97" height="25" viewBox="0 0 97 25"><g fill="#8c8ea8" stroke="#8c8ea8"><rect x="8" y="6" width="2" height="13" stroke="none"/><polygon points="17,6 17,19 10,12.5" stroke="none"/><polygon points="38,6 38,19 31,12.5" stroke="none"/><polygon points="56,6 56,19 63,12.5" stroke="none"/><polygon points="79,6 79,19 86,12.5" stroke="none"/><rect x="86" y="6" width="2" height="13" stroke="none"/></g></svg>
<div class="t bt" style="left:209px;top:970px;">模型</div>
<div class="a" style="left:261px;top:968px;width:91px;height:26px;background:#d9d9d9;border:1px solid #a3a3a3;border-bottom:none"></div>
<div class="t bt" style="left:271px;top:970px;">3D 視圖</div>
<div class="a" style="left:351px;top:968px;width:128px;height:26px;background:#d9d9d9;border:1px solid #a3a3a3;border-bottom:none"></div>
<div class="t bt" style="left:362px;top:970px;letter-spacing:0.4px">動作研究 1</div>
<!-- ============ STATUS ============ -->
<div class="a" style="left:0px;top:993px;width:1920px;height:1px;background:#a3a3a3"></div>
<div class="a" style="left:0px;top:994px;width:1920px;height:26px;background:#f7f7f7"></div>
<div class="t st" style="left:2px;top:998px;">SOLIDWORKS Premium 2016 x64 Edition</div>
<div class="a" style="left:1685px;top:996px;width:1px;height:23px;background:#cfcfcf"></div>
<div class="a" style="left:1693px;top:996px;width:1px;height:23px;background:#cfcfcf"></div>
<div class="a" style="left:1701px;top:996px;width:1px;height:23px;background:#cfcfcf"></div>
<div class="a" style="left:1717px;top:996px;width:1px;height:23px;background:#cfcfcf"></div>
<div class="t st" style="left:1744px;top:998px;">MMGS</div>
<svg style="left:1811px;top:1004px" width="8" height="5" viewBox="0 0 8 5"><polygon points="0,5 4,1 8,5" fill="#333"/></svg>
<svg style="left:1886px;top:996px" width="30" height="24" viewBox="0 0 30 24"><path d="M1,10 L9,1 L29,13 L23,23 Z" fill="#e4e4e4" stroke="#555" stroke-width="1"/><circle cx="9" cy="8" r="2.5" fill="none" stroke="#555"/><path d="M13,14 L17,8 M16,16 L20,10 M19,18 L23,12" stroke="#555" stroke-width="1.3"/></svg>
<!-- ============ TASKBAR ============ -->
<div class="a" style="left:0px;top:1020px;width:1920px;height:60px;background:#1b2540"></div>
<svg style="left:23px;top:1039px" width="24" height="23" viewBox="0 0 24 23"><path d="M0,3.2 L10,1.8 V10.8 H0 Z M11,1.6 L24,0 V10.8 H11 Z M0,12 H10 V21 L0,19.6 Z M11,12 H24 V23 L11,21.2 Z" fill="#fff"/></svg>
<svg style="left:96px;top:1037px" width="26" height="26" viewBox="0 0 26 26"><circle cx="15.5" cy="10.5" r="8.3" fill="none" stroke="#fff" stroke-width="1.6"/><path d="M9.5,16.5 L1,25" stroke="#fff" stroke-width="1.8"/></svg>
<svg style="left:166px;top:1037px" width="26" height="25" viewBox="0 0 26 25"><rect x="4" y="5" width="14" height="14" fill="none" stroke="#fff" stroke-width="1.6"/><path d="M1,1.5 H20 M1,22.5 H20 M23,1 V24" stroke="#fff" stroke-width="1.6"/></svg>
<div class="a" style="left:596px;top:1020px;width:72px;height:60px;background:#a6592b"></div>
<div class="a" style="left:596px;top:1077px;width:72px;height:3px;background:#f7830e"></div>
<div class="a" style="left:1121px;top:1020px;width:68px;height:60px;background:#3b4763"></div>
<div class="a" style="left:227px;top:1077px;width:61px;height:3px;background:#76b9ed"></div>
<div class="a" style="left:377px;top:1077px;width:61px;height:3px;background:#76b9ed"></div>
<div class="a" style="left:1121px;top:1077px;width:68px;height:3px;background:#76b9ed"></div>
<div class="a" style="left:1202px;top:1077px;width:60px;height:3px;background:#76b9ed"></div>
<div class="a" style="left:1190px;top:1020px;width:3px;height:60px;background:#2a3550"></div>
<svg style="left:240px;top:1032px" width="38" height="38" viewBox="0 0 38 38"><circle cx="18" cy="18" r="17" fill="#db3a2c"/><path d="M18,18 L3.3,9.5 A17,17 0 0 0 18,35 Z" fill="#1e9b47"/><path d="M18,18 L18,35 A17,17 0 0 0 32.7,9.5 Z" fill="#f6c21a"/><circle cx="18" cy="18" r="7.5" fill="#fff"/><circle cx="18" cy="18" r="6" fill="#3577e8"/><circle cx="26" cy="26" r="11" fill="#3a2a20"/><circle cx="26" cy="24" r="6" fill="#8a6a40"/></svg>
<svg style="left:314px;top:1032px" width="38" height="38" viewBox="0 0 38 38"><defs><linearGradient id="edg" x1="0" y1="0" x2="1" y2="1"><stop offset="0" stop-color="#50e0a0"/><stop offset="0.5" stop-color="#1a9ad8"/><stop offset="1" stop-color="#0c55b0"/></linearGradient></defs><path d="M19,1 C 30,1 37,9 37,17 C 37,23 32,26 27,26 C 22,26 16,24 16,19 C 16,16 19,14 21,14 C 17,10 6,12 4,22 C 2,14 7,1 19,1 Z" fill="url(#edg)"/><path d="M4,22 C 5,32 14,37 22,36 C 28,35 33,32 35,28 C 30,31 21,31 17,27 C 13,23 13,16 19,13 C 11,13 5,17 4,22 Z" fill="#0f62c2"/></svg>
<svg style="left:389px;top:1034px" width="35" height="32" viewBox="0 0 35 32"><path d="M1,3 H13 L16,7 H34 V30 H1 Z" fill="#f2c03a"/><rect x="1" y="11" width="33" height="19" fill="#ffd65a"/><path d="M10,31 V21 H25 V31 H21 V25 H14 V31 Z" fill="#1b7ad0"/></svg>
<svg style="left:464px;top:1032px" width="36" height="35" viewBox="0 0 36 35"><rect x="2" y="1" width="32" height="32" fill="#1f9b46" stroke="#eee" stroke-width="1.5"/><path d="M6,5 H13 L17,13 L21,5 H28 L21,17 L29,29 H21 L17,21 L13,29 H5 L13,17 Z" fill="#fff"/><path d="M20,20 H34 V33 H20 Z" fill="#e9f5ea"/></svg>
<svg style="left:539px;top:1032px" width="36" height="35" viewBox="0 0 36 35"><rect x="2" y="1" width="32" height="32" fill="#e46a3a" stroke="#f3c9b0" stroke-width="1.5"/><path d="M8,6 H18 C 24,6 26,10 26,13 C 26,17 23,20 18,20 H13 V28 H8 Z M13,10 V16 H17 C 20,16 21,14 21,13 C 21,11 20,10 17,10 Z" fill="#fff"/><circle cx="27" cy="25" r="6" fill="#fff" opacity="0.9"/></svg>
<svg style="left:614px;top:1032px" width="35" height="35" viewBox="0 0 35 35"><circle cx="17.5" cy="17.5" r="16.5" fill="#1ed760"/><path d="M8,12 C 15,9.5 22,10 28,13 M9,18 C 15,16 21,16.5 26,19 M10,23.5 C 15,22 20,22.5 24,24.5" stroke="#191414" stroke-width="2.6" fill="none" stroke-linecap="round"/></svg>
<svg style="left:688px;top:1031px" width="38" height="38" viewBox="0 0 38 38"><polygon points="2,7 17,1 35,6 35,27 19,36 2,29" fill="#c41f1f"/><polygon points="2,7 17,1 35,6 19,12" fill="#e84545"/><polygon points="19,12 35,6 35,27 19,36" fill="#8a1414"/><text x="4" y="27" font-size="18" font-weight="bold" font-family="Liberation Sans" fill="#fff" stroke="#400" stroke-width="0.8" paint-order="stroke">S</text><text x="18" y="27" font-size="16" font-weight="bold" font-family="Liberation Sans" fill="#fff" stroke="#400" stroke-width="0.8" paint-order="stroke">W</text><text x="15" y="37" font-size="10" font-weight="bold" font-family="Liberation Sans" fill="#fff" stroke="#000" stroke-width="1" paint-order="stroke" letter-spacing="-0.5">2016</text></svg>
<svg style="left:764px;top:1032px" width="36" height="36" viewBox="0 0 36 36"><rect x="0" y="0" width="36" height="36" fill="#f6e6e6"/><path d="M5,30 L15,5 H21 L31,30 H25 L23,24 H13 L11,30 Z M15,19 H21 L18,10 Z" fill="#c8262b" fill-rule="evenodd"/><text x="25" y="34" font-size="6" font-weight="bold" fill="#c8262b" font-family="Liberation Sans">LT</text></svg>
<svg style="left:838px;top:1032px" width="35" height="34" viewBox="0 0 35 34"><rect x="1" y="1" width="32" height="32" fill="#e8eef8" stroke="#9ab" stroke-width="1"/><path d="M3,5 H9 L12,22 L16,5 H20 L24,22 L27,5 H33 L27,28 H21 L18,14 L15,28 H9 Z" fill="#1d5bb5"/><path d="M22,22 L34,24 L32,33 L20,31 Z" fill="#fff" stroke="#bbb"/></svg>
<svg style="left:913px;top:1032px" width="36" height="33" viewBox="0 0 36 33"><rect x="1" y="1" width="34" height="31" fill="#2a1a05" stroke="#f39a1e" stroke-width="2"/><text x="6" y="25" font-size="20" font-weight="bold" font-family="Liberation Sans" fill="#f39a1e">Ai</text></svg>
<svg style="left:987px;top:1031px" width="38" height="37" viewBox="0 0 38 37"><path d="M3,20 C 1,10 12,4 22,7 C 28,9 28,14 23,15 C 19,16 20,21 24,22 C 28,23 27,30 18,32 C 10,34 5,28 3,20 Z" fill="#d8e6f0" stroke="#8aa" stroke-width="1"/><circle cx="10" cy="15" r="2.5" fill="#e04040"/><circle cx="15" cy="11" r="2.5" fill="#f0c020"/><circle cx="9" cy="22" r="2.5" fill="#3a80d0"/><circle cx="15" cy="26" r="2.5" fill="#40b040"/><path d="M19,33 L34,4" stroke="#c08040" stroke-width="3"/><path d="M33,2 L37,0 L35,7 Z" fill="#e0b060"/></svg>
<svg style="left:1063px;top:1032px" width="38" height="37" viewBox="0 0 38 37"><circle cx="18.5" cy="18.5" r="15" fill="none" stroke="#3cb04a" stroke-width="5" stroke-dasharray="70 6"/><circle cx="18.5" cy="18.5" r="15" fill="none" stroke="#2a8a3a" stroke-width="1.5" stroke-dasharray="3 3"/></svg>
<svg style="left:1138px;top:1031px" width="38" height="38" viewBox="0 0 38 38"><polygon points="2,7 17,1 35,6 35,27 19,36 2,29" fill="#c41f1f"/><polygon points="2,7 17,1 35,6 19,12" fill="#e84545"/><polygon points="19,12 35,6 35,27 19,36" fill="#8a1414"/><text x="4" y="27" font-size="18" font-weight="bold" font-family="Liberation Sans" fill="#fff" stroke="#400" stroke-width="0.8" paint-order="stroke">S</text><text x="18" y="27" font-size="16" font-weight="bold" font-family="Liberation Sans" fill="#fff" stroke="#400" stroke-width="0.8" paint-order="stroke">W</text><text x="15" y="37" font-size="10" font-weight="bold" font-family="Liberation Sans" fill="#fff" stroke="#000" stroke-width="1" paint-order="stroke" letter-spacing="-0.5">2016</text></svg>
<svg style="left:1212px;top:1032px" width="37" height="36" viewBox="0 0 37 36"><rect x="0" y="0" width="37" height="36" rx="8" fill="#06c152"/><ellipse cx="18.5" cy="16.5" rx="14" ry="11" fill="#fff"/><path d="M14,26 L12,32 L22,26 Z" fill="#fff"/><text x="18.5" y="20.5" font-size="9" font-weight="bold" font-family="Liberation Sans" fill="#06c152" text-anchor="middle">LINE</text></svg>
<svg style="left:1511px;top:1043px" width="20" height="12" viewBox="0 0 20 12"><path d="M1,11 L10,2 L19,11" fill="none" stroke="#fff" stroke-width="1.5"/></svg>
<svg style="left:1548px;top:1038px" width="18" height="24" viewBox="0 0 18 24"><rect x="2" y="7" width="10" height="10" rx="1" fill="none" stroke="#fff" stroke-width="1.3"/><path d="M12,10 L16,8 V16 L12,14" fill="none" stroke="#fff" stroke-width="1.3"/><path d="M3,4 C 6,1 12,1 15,4 M3,20 C 6,23 12,23 15,20" fill="none" stroke="#fff" stroke-width="1.1"/></svg>
<svg style="left:1580px;top:1039px" width="26" height="22" viewBox="0 0 26 22"><rect x="6" y="6" width="18" height="11" fill="#fff"/><path d="M6,6 H24 V17 H6 Z M24,9 H26 V14 H24" fill="none" stroke="#fff" stroke-width="1.3"/><path d="M2,2 V6 M5,2 V6 M1,6 H6 V9 C 6,11 2,11 2,9 Z M3.5,11 V19 H6" fill="none" stroke="#fff" stroke-width="1.1"/></svg>
<svg style="left:1616px;top:1038px" width="24" height="24" viewBox="0 0 24 24"><path d="M1,8 H6 L12,2 V22 L6,16 H1 Z" fill="none" stroke="#fff" stroke-width="1.3"/><path d="M15,9 C 17,11 17,13 15,15 M18,6 C 21,9 21,15 18,18 M21,3 C 25,8 25,16 21,21" fill="none" stroke="#c8ccd8" stroke-width="1.2"/></svg>
<div class="t tw" style="left:1650px;top:1039px;font-size:24.5px">英</div>
<svg style="left:1695px;top:1038px" width="23" height="23" viewBox="0 0 23 23"><rect x="0" y="0" width="23" height="23" fill="#fff"/><path d="M9,5 L7,9 H15 V16 C 15,18 13,18 11,17" fill="none" stroke="#111" stroke-width="1.5"/></svg>
<div class="t tw" style="left:1744px;top:1027px;">下午<span style="font-size:19px;letter-spacing:0.3px"> 02:12</span></div>
<div class="t tw" style="left:1744px;top:1053px;font-size:19px;letter-spacing:0.35px">2021/1/14</div>
<svg style="left:1857px;top:1038px" width="28" height="25" viewBox="0 0 28 25"><path d="M1,1 H26 V18 H10 L5,23 V18 H1 Z" fill="#fff"/><path d="M5,6 H21 M5,10 H21 M5,14 H15" stroke="#1b2540" stroke-width="1.4"/><circle cx="22" cy="19" r="5" fill="#1b2540" stroke="#fff" stroke-width="1.3"/></svg>
<div class="a" style="left:1912px;top:1020px;width:2px;height:60px;background:#5a6580"></div>
</body></html>
